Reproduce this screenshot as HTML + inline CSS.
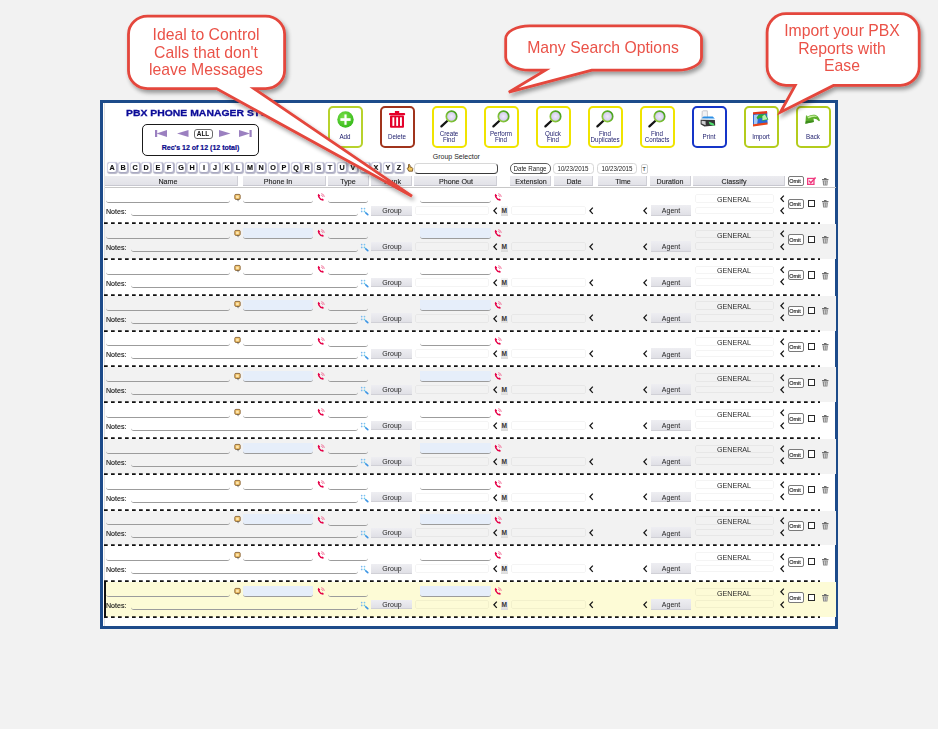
<!DOCTYPE html>
<html><head><meta charset="utf-8"><style>
html,body{margin:0;padding:0;}
body{width:938px;height:729px;position:relative;overflow:hidden;background:#f2f2f2;font-family:"Liberation Sans", sans-serif;}
.t{position:absolute;white-space:nowrap;}
</style></head><body>
<div style="position:absolute;left:100px;top:100px;width:738px;height:529px;box-sizing:border-box;border:3px solid #1d4b8a;background:#fff"></div><div style="position:absolute;left:103.5px;top:103px;width:1px;height:523px;background:#e2e2e2"></div><div class="t" style="left:126px;top:108.27px;font-size:9.6px;line-height:9.6px;color:#0b0b98;font-weight:700;transform:scaleX(1.085);transform-origin:0 50%;-webkit-text-stroke:0.3px #0b0b98">PBX PHONE MANAGER STUDIO</div><div style="position:absolute;left:142px;top:123.5px;width:117px;height:32px;box-sizing:border-box;border:1.7px solid #1a1a1a;border-radius:5px"></div><svg style="position:absolute;left:155px;top:130px;overflow:visible" width="12" height="7" viewBox="0 0 12 7"><rect x="0" y="0" width="2.2" height="7" fill="#9b80c0"/><path d="M1.5 3.5 L12 0 L12 7 Z" fill="#9b80c0"/></svg><svg style="position:absolute;left:176.5px;top:130px;overflow:visible" width="12" height="7" viewBox="0 0 12 7"><path d="M0 3.5 L11.5 0 L11.5 7 Z" fill="#9b80c0"/></svg><svg style="position:absolute;left:218.5px;top:130px;overflow:visible" width="12" height="7" viewBox="0 0 12 7"><path d="M11.5 3.5 L0 0 L0 7 Z" fill="#9b80c0"/></svg><svg style="position:absolute;left:238.5px;top:130px;overflow:visible" width="13" height="7" viewBox="0 0 13 7"><rect x="10.5" y="0" width="2.2" height="7" fill="#9b80c0"/><path d="M11 3.5 L0 0 L0 7 Z" fill="#9b80c0"/></svg><div style="position:absolute;left:194px;top:128.5px;width:18.5px;height:10px;box-sizing:border-box;border:1px solid #6a6a6a;border-radius:3px;background:#fff"></div><div class="t" style="left:53.30000000000001px;width:300px;text-align:center;top:130.47px;font-size:7px;line-height:7px;color:#111;font-weight:700;transform:scaleX(0.92)">ALL</div><div class="t" style="left:50.5px;width:300px;text-align:center;top:144.27px;font-size:7px;line-height:7px;color:#0a0a8c;font-weight:700;-webkit-text-stroke:0.2px #0a0a8c">Rec's 12 of 12 (12 total)</div><div style="position:absolute;left:327.5px;top:105.5px;width:35px;height:42px;box-sizing:border-box;border:2px solid #b8d22c;border-radius:5px;background:#fff"></div><div class="t" style="left:195.0px;width:300px;text-align:center;top:133.83px;font-size:6.7px;line-height:6.7px;color:#20206e;font-weight:400;transform:scaleX(0.93);transform-origin:50% 50%">Add</div><div style="position:absolute;left:379.5px;top:105.5px;width:35px;height:42px;box-sizing:border-box;border:2px solid #a0341c;border-radius:5px;background:#fff"></div><div class="t" style="left:247.0px;width:300px;text-align:center;top:133.83px;font-size:6.7px;line-height:6.7px;color:#20206e;font-weight:400;transform:scaleX(0.93);transform-origin:50% 50%">Delete</div><div style="position:absolute;left:431.5px;top:105.5px;width:35px;height:42px;box-sizing:border-box;border:2px solid #f0e400;border-radius:5px;background:#fff"></div><div class="t" style="left:299.0px;width:300px;text-align:center;top:130.53px;font-size:6.7px;line-height:6.7px;color:#20206e;font-weight:400;transform:scaleX(0.93);transform-origin:50% 50%">Create</div><div class="t" style="left:299.0px;width:300px;text-align:center;top:137.03px;font-size:6.7px;line-height:6.7px;color:#20206e;font-weight:400;transform:scaleX(0.93);transform-origin:50% 50%">Find</div><div style="position:absolute;left:483.5px;top:105.5px;width:35px;height:42px;box-sizing:border-box;border:2px solid #f0e400;border-radius:5px;background:#fff"></div><div class="t" style="left:351.0px;width:300px;text-align:center;top:130.53px;font-size:6.7px;line-height:6.7px;color:#20206e;font-weight:400;transform:scaleX(0.93);transform-origin:50% 50%">Perform</div><div class="t" style="left:351.0px;width:300px;text-align:center;top:137.03px;font-size:6.7px;line-height:6.7px;color:#20206e;font-weight:400;transform:scaleX(0.93);transform-origin:50% 50%">Find</div><div style="position:absolute;left:535.5px;top:105.5px;width:35px;height:42px;box-sizing:border-box;border:2px solid #f0e400;border-radius:5px;background:#fff"></div><div class="t" style="left:403.0px;width:300px;text-align:center;top:130.53px;font-size:6.7px;line-height:6.7px;color:#20206e;font-weight:400;transform:scaleX(0.93);transform-origin:50% 50%">Quick</div><div class="t" style="left:403.0px;width:300px;text-align:center;top:137.03px;font-size:6.7px;line-height:6.7px;color:#20206e;font-weight:400;transform:scaleX(0.93);transform-origin:50% 50%">Find</div><div style="position:absolute;left:587.5px;top:105.5px;width:35px;height:42px;box-sizing:border-box;border:2px solid #f0e400;border-radius:5px;background:#fff"></div><div class="t" style="left:455.0px;width:300px;text-align:center;top:130.53px;font-size:6.7px;line-height:6.7px;color:#20206e;font-weight:400;transform:scaleX(0.93);transform-origin:50% 50%">Find</div><div class="t" style="left:455.0px;width:300px;text-align:center;top:137.03px;font-size:6.7px;line-height:6.7px;color:#20206e;font-weight:400;transform:scaleX(0.93);transform-origin:50% 50%">Duplicates</div><div style="position:absolute;left:639.5px;top:105.5px;width:35px;height:42px;box-sizing:border-box;border:2px solid #f0e400;border-radius:5px;background:#fff"></div><div class="t" style="left:507.0px;width:300px;text-align:center;top:130.53px;font-size:6.7px;line-height:6.7px;color:#20206e;font-weight:400;transform:scaleX(0.93);transform-origin:50% 50%">Find</div><div class="t" style="left:507.0px;width:300px;text-align:center;top:137.03px;font-size:6.7px;line-height:6.7px;color:#20206e;font-weight:400;transform:scaleX(0.93);transform-origin:50% 50%">Contacts</div><div style="position:absolute;left:691.5px;top:105.5px;width:35px;height:42px;box-sizing:border-box;border:2px solid #1535c8;border-radius:5px;background:#fff"></div><div class="t" style="left:559.0px;width:300px;text-align:center;top:133.83px;font-size:6.7px;line-height:6.7px;color:#20206e;font-weight:400;transform:scaleX(0.93);transform-origin:50% 50%">Print</div><div style="position:absolute;left:743.5px;top:105.5px;width:35px;height:42px;box-sizing:border-box;border:2px solid #b4cc1c;border-radius:5px;background:#fff"></div><div class="t" style="left:611.0px;width:300px;text-align:center;top:133.83px;font-size:6.7px;line-height:6.7px;color:#20206e;font-weight:400;transform:scaleX(0.93);transform-origin:50% 50%">Import</div><div style="position:absolute;left:795.5px;top:105.5px;width:35px;height:42px;box-sizing:border-box;border:2px solid #b4cc1c;border-radius:5px;background:#fff"></div><div class="t" style="left:663.0px;width:300px;text-align:center;top:133.83px;font-size:6.7px;line-height:6.7px;color:#20206e;font-weight:400;transform:scaleX(0.93);transform-origin:50% 50%">Back</div><svg style="position:absolute;left:336.5px;top:110.7px;overflow:visible" width="17" height="17" viewBox="0 0 17 17"><defs><radialGradient id="gp" cx="40%" cy="35%" r="70%"><stop offset="0" stop-color="#7be04a"/><stop offset="1" stop-color="#33b818"/></radialGradient></defs><circle cx="8.5" cy="8.5" r="8.2" fill="url(#gp)"/><rect x="3.4" y="7.2" width="10.2" height="2.7" fill="#fff"/><rect x="7.4" y="3.4" width="2.2" height="10.4" fill="#fff"/></svg><svg style="position:absolute;left:388.8px;top:110.8px;overflow:visible" width="16.2" height="17" viewBox="0 0 16.2 17"><rect x="5.9" y="0" width="4.3" height="2" fill="#e4002a"/><rect x="0" y="2" width="16.2" height="2.3" rx="1" fill="#e4002a"/><rect x="1" y="4.6" width="14" height="12.2" rx="1" fill="#e4002a"/><rect x="3.4" y="6.3" width="1.9" height="8.6" fill="#fff"/><rect x="7.2" y="6.3" width="1.9" height="8.6" fill="#fff"/><rect x="11" y="6.3" width="1.9" height="8.6" fill="#fff"/></svg><svg style="position:absolute;left:437.0px;top:109px;overflow:visible" width="18" height="19" viewBox="0 0 18 19"><defs><radialGradient id="gl2" cx="50%" cy="50%" r="60%"><stop offset="0" stop-color="#eeeaf8"/><stop offset="1" stop-color="#c8c0e8"/></radialGradient><linearGradient id="gr2" x1="0" y1="1" x2="1" y2="0"><stop offset="0" stop-color="#9ad040"/><stop offset="1" stop-color="#3a9a1a"/></linearGradient></defs><line x1="10.2" y1="12" x2="4.4" y2="17.4" stroke="#151515" stroke-width="2.3" stroke-linecap="round"/><circle cx="14.5" cy="7.4" r="5.2" fill="url(#gl2)" stroke="url(#gr2)" stroke-width="1.7"/></svg><svg style="position:absolute;left:489.0px;top:109px;overflow:visible" width="18" height="19" viewBox="0 0 18 19"><defs><radialGradient id="gl3" cx="50%" cy="50%" r="60%"><stop offset="0" stop-color="#eeeaf8"/><stop offset="1" stop-color="#c8c0e8"/></radialGradient><linearGradient id="gr3" x1="0" y1="1" x2="1" y2="0"><stop offset="0" stop-color="#9ad040"/><stop offset="1" stop-color="#3a9a1a"/></linearGradient></defs><line x1="10.2" y1="12" x2="4.4" y2="17.4" stroke="#151515" stroke-width="2.3" stroke-linecap="round"/><circle cx="14.5" cy="7.4" r="5.2" fill="url(#gl3)" stroke="url(#gr3)" stroke-width="1.7"/></svg><svg style="position:absolute;left:541.0px;top:109px;overflow:visible" width="18" height="19" viewBox="0 0 18 19"><defs><radialGradient id="gl4" cx="50%" cy="50%" r="60%"><stop offset="0" stop-color="#eeeaf8"/><stop offset="1" stop-color="#c8c0e8"/></radialGradient><linearGradient id="gr4" x1="0" y1="1" x2="1" y2="0"><stop offset="0" stop-color="#9ad040"/><stop offset="1" stop-color="#3a9a1a"/></linearGradient></defs><line x1="10.2" y1="12" x2="4.4" y2="17.4" stroke="#151515" stroke-width="2.3" stroke-linecap="round"/><circle cx="14.5" cy="7.4" r="5.2" fill="url(#gl4)" stroke="url(#gr4)" stroke-width="1.7"/></svg><svg style="position:absolute;left:593.0px;top:109px;overflow:visible" width="18" height="19" viewBox="0 0 18 19"><defs><radialGradient id="gl5" cx="50%" cy="50%" r="60%"><stop offset="0" stop-color="#eeeaf8"/><stop offset="1" stop-color="#c8c0e8"/></radialGradient><linearGradient id="gr5" x1="0" y1="1" x2="1" y2="0"><stop offset="0" stop-color="#9ad040"/><stop offset="1" stop-color="#3a9a1a"/></linearGradient></defs><line x1="10.2" y1="12" x2="4.4" y2="17.4" stroke="#151515" stroke-width="2.3" stroke-linecap="round"/><circle cx="14.5" cy="7.4" r="5.2" fill="url(#gl5)" stroke="url(#gr5)" stroke-width="1.7"/></svg><svg style="position:absolute;left:645.0px;top:109px;overflow:visible" width="18" height="19" viewBox="0 0 18 19"><defs><radialGradient id="gl6" cx="50%" cy="50%" r="60%"><stop offset="0" stop-color="#eeeaf8"/><stop offset="1" stop-color="#c8c0e8"/></radialGradient><linearGradient id="gr6" x1="0" y1="1" x2="1" y2="0"><stop offset="0" stop-color="#9ad040"/><stop offset="1" stop-color="#3a9a1a"/></linearGradient></defs><line x1="10.2" y1="12" x2="4.4" y2="17.4" stroke="#151515" stroke-width="2.3" stroke-linecap="round"/><circle cx="14.5" cy="7.4" r="5.2" fill="url(#gl6)" stroke="url(#gr6)" stroke-width="1.7"/></svg><svg style="position:absolute;left:696px;top:106px;overflow:visible" width="26" height="24" viewBox="0 0 26 24"><path d="M6.2 5.6 Q6.4 4.8 7.2 4.8 L11.3 4.8 L11.6 12.5 L6 12.5 Z" fill="#f2f2f4" stroke="#b4b4bc" stroke-width="0.7"/><path d="M5.2 12.6 L7.6 10.4 L16.8 10.6 L18.8 12.8 Z" fill="#2c8fe6"/><path d="M5.2 12.6 L18.8 12.8 L18.6 14 L5 13.8 Z" fill="#dff0ff"/><path d="M4.6 13.8 L18.9 14 L19.2 19.6 L8.4 20.6 L4.6 18.2 Z" fill="#363636"/><path d="M5.6 14.8 L9.6 15.2 L9.6 19.2 L5.6 17.4 Z" fill="#cfcfd2"/><path d="M12.6 15.6 L17.6 17.6 L18.6 20 L13.8 18.6 Z" fill="#52e070"/></svg><svg style="position:absolute;left:748px;top:106px;overflow:visible" width="26" height="24" viewBox="0 0 26 24"><path d="M5 7 L19.2 6 L19.6 17.6 L5 20 Z" fill="#2a6ad8"/><path d="M5 6.2 L19 5 L19.2 7.6 L5 8.4 Z" fill="#e2381c"/><path d="M5 18.2 L19.4 16.4 L19.6 18.4 L5 20.6 Z" fill="#ea4418"/><path d="M6 9 L10.5 8.6 L9.2 17.8 L6 18.3 Z" fill="#a8c8f4"/><path d="M8.6 11.6 Q10.6 7.2 15.6 8.6 L17 7.4 L20.4 13.6 L13.6 15 L15 12.8 Q12.4 10.8 9.6 13.4 Z" fill="#2aa838"/><path d="M14.4 10 L17 8.6 L19.4 13.2 L14.4 14.2 Z" fill="#b8f0b0"/></svg><svg style="position:absolute;left:800px;top:108px;overflow:visible" width="26" height="22" viewBox="0 0 26 22"><path d="M5.3 15.8 L6 7.2 L8 8.2 Q11 6.2 15 6.8 Q18.2 7.6 20 12.4 L19 13.2 Q16.8 10.6 13.6 10.4 L13.8 14 Z" fill="#5cae2a"/><path d="M6.4 8 L8.2 8.8 Q11.4 7 15 7.6 Q16.2 8 17 9 Q12.8 8 8.6 10.6 Z" fill="#c2ec9a"/><path d="M6 13 L13.6 12.6 L13.8 14 L5.3 15.8 Z" fill="#3e8c1e"/></svg><div style="position:absolute;left:106.8px;top:161.6px;width:10px;height:11px;box-sizing:border-box;border:1px solid #d4d4e6;border-right-color:#b0b0c8;border-bottom-color:#a8a8c0;border-radius:3px;background:#fff;box-shadow:0.6px 0.8px 0.8px rgba(90,90,130,0.45)"></div><div class="t" style="left:-38.400000000000006px;width:300px;text-align:center;top:163.67px;font-size:7.6px;line-height:7.6px;color:#111;font-weight:700;transform:scaleX(0.95);-webkit-text-stroke:0.15px #111">A</div><div style="position:absolute;left:118.3px;top:161.6px;width:10px;height:11px;box-sizing:border-box;border:1px solid #d4d4e6;border-right-color:#b0b0c8;border-bottom-color:#a8a8c0;border-radius:3px;background:#fff;box-shadow:0.6px 0.8px 0.8px rgba(90,90,130,0.45)"></div><div class="t" style="left:-26.900000000000006px;width:300px;text-align:center;top:163.67px;font-size:7.6px;line-height:7.6px;color:#111;font-weight:700;transform:scaleX(0.95);-webkit-text-stroke:0.15px #111">B</div><div style="position:absolute;left:129.8px;top:161.6px;width:10px;height:11px;box-sizing:border-box;border:1px solid #d4d4e6;border-right-color:#b0b0c8;border-bottom-color:#a8a8c0;border-radius:3px;background:#fff;box-shadow:0.6px 0.8px 0.8px rgba(90,90,130,0.45)"></div><div class="t" style="left:-15.399999999999977px;width:300px;text-align:center;top:163.67px;font-size:7.6px;line-height:7.6px;color:#111;font-weight:700;transform:scaleX(0.95);-webkit-text-stroke:0.15px #111">C</div><div style="position:absolute;left:141.3px;top:161.6px;width:10px;height:11px;box-sizing:border-box;border:1px solid #d4d4e6;border-right-color:#b0b0c8;border-bottom-color:#a8a8c0;border-radius:3px;background:#fff;box-shadow:0.6px 0.8px 0.8px rgba(90,90,130,0.45)"></div><div class="t" style="left:-3.8999999999999773px;width:300px;text-align:center;top:163.67px;font-size:7.6px;line-height:7.6px;color:#111;font-weight:700;transform:scaleX(0.95);-webkit-text-stroke:0.15px #111">D</div><div style="position:absolute;left:152.8px;top:161.6px;width:10px;height:11px;box-sizing:border-box;border:1px solid #d4d4e6;border-right-color:#b0b0c8;border-bottom-color:#a8a8c0;border-radius:3px;background:#fff;box-shadow:0.6px 0.8px 0.8px rgba(90,90,130,0.45)"></div><div class="t" style="left:7.600000000000023px;width:300px;text-align:center;top:163.67px;font-size:7.6px;line-height:7.6px;color:#111;font-weight:700;transform:scaleX(0.95);-webkit-text-stroke:0.15px #111">E</div><div style="position:absolute;left:164.3px;top:161.6px;width:10px;height:11px;box-sizing:border-box;border:1px solid #d4d4e6;border-right-color:#b0b0c8;border-bottom-color:#a8a8c0;border-radius:3px;background:#fff;box-shadow:0.6px 0.8px 0.8px rgba(90,90,130,0.45)"></div><div class="t" style="left:19.100000000000023px;width:300px;text-align:center;top:163.67px;font-size:7.6px;line-height:7.6px;color:#111;font-weight:700;transform:scaleX(0.95);-webkit-text-stroke:0.15px #111">F</div><div style="position:absolute;left:175.8px;top:161.6px;width:10px;height:11px;box-sizing:border-box;border:1px solid #d4d4e6;border-right-color:#b0b0c8;border-bottom-color:#a8a8c0;border-radius:3px;background:#fff;box-shadow:0.6px 0.8px 0.8px rgba(90,90,130,0.45)"></div><div class="t" style="left:30.600000000000023px;width:300px;text-align:center;top:163.67px;font-size:7.6px;line-height:7.6px;color:#111;font-weight:700;transform:scaleX(0.95);-webkit-text-stroke:0.15px #111">G</div><div style="position:absolute;left:187.3px;top:161.6px;width:10px;height:11px;box-sizing:border-box;border:1px solid #d4d4e6;border-right-color:#b0b0c8;border-bottom-color:#a8a8c0;border-radius:3px;background:#fff;box-shadow:0.6px 0.8px 0.8px rgba(90,90,130,0.45)"></div><div class="t" style="left:42.10000000000002px;width:300px;text-align:center;top:163.67px;font-size:7.6px;line-height:7.6px;color:#111;font-weight:700;transform:scaleX(0.95);-webkit-text-stroke:0.15px #111">H</div><div style="position:absolute;left:198.8px;top:161.6px;width:10px;height:11px;box-sizing:border-box;border:1px solid #d4d4e6;border-right-color:#b0b0c8;border-bottom-color:#a8a8c0;border-radius:3px;background:#fff;box-shadow:0.6px 0.8px 0.8px rgba(90,90,130,0.45)"></div><div class="t" style="left:53.60000000000002px;width:300px;text-align:center;top:163.67px;font-size:7.6px;line-height:7.6px;color:#111;font-weight:700;transform:scaleX(0.95);-webkit-text-stroke:0.15px #111">I</div><div style="position:absolute;left:210.3px;top:161.6px;width:10px;height:11px;box-sizing:border-box;border:1px solid #d4d4e6;border-right-color:#b0b0c8;border-bottom-color:#a8a8c0;border-radius:3px;background:#fff;box-shadow:0.6px 0.8px 0.8px rgba(90,90,130,0.45)"></div><div class="t" style="left:65.10000000000002px;width:300px;text-align:center;top:163.67px;font-size:7.6px;line-height:7.6px;color:#111;font-weight:700;transform:scaleX(0.95);-webkit-text-stroke:0.15px #111">J</div><div style="position:absolute;left:221.8px;top:161.6px;width:10px;height:11px;box-sizing:border-box;border:1px solid #d4d4e6;border-right-color:#b0b0c8;border-bottom-color:#a8a8c0;border-radius:3px;background:#fff;box-shadow:0.6px 0.8px 0.8px rgba(90,90,130,0.45)"></div><div class="t" style="left:76.60000000000002px;width:300px;text-align:center;top:163.67px;font-size:7.6px;line-height:7.6px;color:#111;font-weight:700;transform:scaleX(0.95);-webkit-text-stroke:0.15px #111">K</div><div style="position:absolute;left:233.3px;top:161.6px;width:10px;height:11px;box-sizing:border-box;border:1px solid #d4d4e6;border-right-color:#b0b0c8;border-bottom-color:#a8a8c0;border-radius:3px;background:#fff;box-shadow:0.6px 0.8px 0.8px rgba(90,90,130,0.45)"></div><div class="t" style="left:88.10000000000002px;width:300px;text-align:center;top:163.67px;font-size:7.6px;line-height:7.6px;color:#111;font-weight:700;transform:scaleX(0.95);-webkit-text-stroke:0.15px #111">L</div><div style="position:absolute;left:244.8px;top:161.6px;width:10px;height:11px;box-sizing:border-box;border:1px solid #d4d4e6;border-right-color:#b0b0c8;border-bottom-color:#a8a8c0;border-radius:3px;background:#fff;box-shadow:0.6px 0.8px 0.8px rgba(90,90,130,0.45)"></div><div class="t" style="left:99.60000000000002px;width:300px;text-align:center;top:163.67px;font-size:7.6px;line-height:7.6px;color:#111;font-weight:700;transform:scaleX(0.95);-webkit-text-stroke:0.15px #111">M</div><div style="position:absolute;left:256.3px;top:161.6px;width:10px;height:11px;box-sizing:border-box;border:1px solid #d4d4e6;border-right-color:#b0b0c8;border-bottom-color:#a8a8c0;border-radius:3px;background:#fff;box-shadow:0.6px 0.8px 0.8px rgba(90,90,130,0.45)"></div><div class="t" style="left:111.10000000000002px;width:300px;text-align:center;top:163.67px;font-size:7.6px;line-height:7.6px;color:#111;font-weight:700;transform:scaleX(0.95);-webkit-text-stroke:0.15px #111">N</div><div style="position:absolute;left:267.8px;top:161.6px;width:10px;height:11px;box-sizing:border-box;border:1px solid #d4d4e6;border-right-color:#b0b0c8;border-bottom-color:#a8a8c0;border-radius:3px;background:#fff;box-shadow:0.6px 0.8px 0.8px rgba(90,90,130,0.45)"></div><div class="t" style="left:122.60000000000002px;width:300px;text-align:center;top:163.67px;font-size:7.6px;line-height:7.6px;color:#111;font-weight:700;transform:scaleX(0.95);-webkit-text-stroke:0.15px #111">O</div><div style="position:absolute;left:279.3px;top:161.6px;width:10px;height:11px;box-sizing:border-box;border:1px solid #d4d4e6;border-right-color:#b0b0c8;border-bottom-color:#a8a8c0;border-radius:3px;background:#fff;box-shadow:0.6px 0.8px 0.8px rgba(90,90,130,0.45)"></div><div class="t" style="left:134.10000000000002px;width:300px;text-align:center;top:163.67px;font-size:7.6px;line-height:7.6px;color:#111;font-weight:700;transform:scaleX(0.95);-webkit-text-stroke:0.15px #111">P</div><div style="position:absolute;left:290.8px;top:161.6px;width:10px;height:11px;box-sizing:border-box;border:1px solid #d4d4e6;border-right-color:#b0b0c8;border-bottom-color:#a8a8c0;border-radius:3px;background:#fff;box-shadow:0.6px 0.8px 0.8px rgba(90,90,130,0.45)"></div><div class="t" style="left:145.60000000000002px;width:300px;text-align:center;top:163.67px;font-size:7.6px;line-height:7.6px;color:#111;font-weight:700;transform:scaleX(0.95);-webkit-text-stroke:0.15px #111">Q</div><div style="position:absolute;left:302.3px;top:161.6px;width:10px;height:11px;box-sizing:border-box;border:1px solid #d4d4e6;border-right-color:#b0b0c8;border-bottom-color:#a8a8c0;border-radius:3px;background:#fff;box-shadow:0.6px 0.8px 0.8px rgba(90,90,130,0.45)"></div><div class="t" style="left:157.10000000000002px;width:300px;text-align:center;top:163.67px;font-size:7.6px;line-height:7.6px;color:#111;font-weight:700;transform:scaleX(0.95);-webkit-text-stroke:0.15px #111">R</div><div style="position:absolute;left:313.8px;top:161.6px;width:10px;height:11px;box-sizing:border-box;border:1px solid #d4d4e6;border-right-color:#b0b0c8;border-bottom-color:#a8a8c0;border-radius:3px;background:#fff;box-shadow:0.6px 0.8px 0.8px rgba(90,90,130,0.45)"></div><div class="t" style="left:168.60000000000002px;width:300px;text-align:center;top:163.67px;font-size:7.6px;line-height:7.6px;color:#111;font-weight:700;transform:scaleX(0.95);-webkit-text-stroke:0.15px #111">S</div><div style="position:absolute;left:325.3px;top:161.6px;width:10px;height:11px;box-sizing:border-box;border:1px solid #d4d4e6;border-right-color:#b0b0c8;border-bottom-color:#a8a8c0;border-radius:3px;background:#fff;box-shadow:0.6px 0.8px 0.8px rgba(90,90,130,0.45)"></div><div class="t" style="left:180.10000000000002px;width:300px;text-align:center;top:163.67px;font-size:7.6px;line-height:7.6px;color:#111;font-weight:700;transform:scaleX(0.95);-webkit-text-stroke:0.15px #111">T</div><div style="position:absolute;left:336.8px;top:161.6px;width:10px;height:11px;box-sizing:border-box;border:1px solid #d4d4e6;border-right-color:#b0b0c8;border-bottom-color:#a8a8c0;border-radius:3px;background:#fff;box-shadow:0.6px 0.8px 0.8px rgba(90,90,130,0.45)"></div><div class="t" style="left:191.60000000000002px;width:300px;text-align:center;top:163.67px;font-size:7.6px;line-height:7.6px;color:#111;font-weight:700;transform:scaleX(0.95);-webkit-text-stroke:0.15px #111">U</div><div style="position:absolute;left:348.3px;top:161.6px;width:10px;height:11px;box-sizing:border-box;border:1px solid #d4d4e6;border-right-color:#b0b0c8;border-bottom-color:#a8a8c0;border-radius:3px;background:#fff;box-shadow:0.6px 0.8px 0.8px rgba(90,90,130,0.45)"></div><div class="t" style="left:203.10000000000002px;width:300px;text-align:center;top:163.67px;font-size:7.6px;line-height:7.6px;color:#111;font-weight:700;transform:scaleX(0.95);-webkit-text-stroke:0.15px #111">V</div><div style="position:absolute;left:359.8px;top:161.6px;width:10px;height:11px;box-sizing:border-box;border:1px solid #d4d4e6;border-right-color:#b0b0c8;border-bottom-color:#a8a8c0;border-radius:3px;background:#fff;box-shadow:0.6px 0.8px 0.8px rgba(90,90,130,0.45)"></div><div class="t" style="left:214.60000000000002px;width:300px;text-align:center;top:163.67px;font-size:7.6px;line-height:7.6px;color:#111;font-weight:700;transform:scaleX(0.95);-webkit-text-stroke:0.15px #111">W</div><div style="position:absolute;left:371.3px;top:161.6px;width:10px;height:11px;box-sizing:border-box;border:1px solid #d4d4e6;border-right-color:#b0b0c8;border-bottom-color:#a8a8c0;border-radius:3px;background:#fff;box-shadow:0.6px 0.8px 0.8px rgba(90,90,130,0.45)"></div><div class="t" style="left:226.10000000000002px;width:300px;text-align:center;top:163.67px;font-size:7.6px;line-height:7.6px;color:#111;font-weight:700;transform:scaleX(0.95);-webkit-text-stroke:0.15px #111">X</div><div style="position:absolute;left:382.8px;top:161.6px;width:10px;height:11px;box-sizing:border-box;border:1px solid #d4d4e6;border-right-color:#b0b0c8;border-bottom-color:#a8a8c0;border-radius:3px;background:#fff;box-shadow:0.6px 0.8px 0.8px rgba(90,90,130,0.45)"></div><div class="t" style="left:237.60000000000002px;width:300px;text-align:center;top:163.67px;font-size:7.6px;line-height:7.6px;color:#111;font-weight:700;transform:scaleX(0.95);-webkit-text-stroke:0.15px #111">Y</div><div style="position:absolute;left:394.3px;top:161.6px;width:10px;height:11px;box-sizing:border-box;border:1px solid #d4d4e6;border-right-color:#b0b0c8;border-bottom-color:#a8a8c0;border-radius:3px;background:#fff;box-shadow:0.6px 0.8px 0.8px rgba(90,90,130,0.45)"></div><div class="t" style="left:249.10000000000002px;width:300px;text-align:center;top:163.67px;font-size:7.6px;line-height:7.6px;color:#111;font-weight:700;transform:scaleX(0.95);-webkit-text-stroke:0.15px #111">Z</div><svg style="position:absolute;left:406.5px;top:163.5px;overflow:visible" width="6" height="7.5" viewBox="0 0 6 7.5"><path d="M1.5 0.5 Q2.5 0 3 1 L3 3 Q5.5 3 5.8 4.5 L5.5 7.2 L1.8 7.2 L0.3 4.5 Q0.2 3.5 1.5 4 Z" fill="#f2c860" stroke="#6a4418" stroke-width="0.8"/></svg><div class="t" style="left:432.8px;top:152.97px;font-size:7px;line-height:7px;color:#262626;font-weight:400;">Group Selector</div><div style="position:absolute;left:414.3px;top:163px;width:84px;height:11px;box-sizing:border-box;border:1px solid #d8d8d8;border-right:1.5px solid #444;border-bottom:1.8px solid #3a3a3a;border-radius:4px;background:#fff"></div><div style="position:absolute;left:509.5px;top:163.3px;width:41px;height:10.8px;box-sizing:border-box;border:1px solid #606060;border-radius:5px;background:#fff"></div><div class="t" style="left:380px;width:300px;text-align:center;top:165.66px;font-size:6.9px;line-height:6.9px;color:#222;font-weight:400;transform:scaleX(0.9)">Date Range</div><div style="position:absolute;left:553px;top:163.3px;width:40.5px;height:10.8px;box-sizing:border-box;border:1px solid #d6d6d6;border-radius:3.5px;background:#fff"></div><div class="t" style="left:423.25px;width:300px;text-align:center;top:165.66px;font-size:6.9px;line-height:6.9px;color:#222;font-weight:400;transform:scaleX(0.9)">10/23/2015</div><div style="position:absolute;left:597.3px;top:163.3px;width:40.10000000000002px;height:10.8px;box-sizing:border-box;border:1px solid #d6d6d6;border-radius:3.5px;background:#fff"></div><div class="t" style="left:467.3499999999999px;width:300px;text-align:center;top:165.66px;font-size:6.9px;line-height:6.9px;color:#222;font-weight:400;transform:scaleX(0.9)">10/23/2015</div><div style="position:absolute;left:641px;top:163.5px;width:6.5px;height:10.5px;box-sizing:border-box;border:1px solid #d0d0d0;border-radius:2px;background:#fff"></div><div class="t" style="left:494.20000000000005px;width:300px;text-align:center;top:166.22px;font-size:6px;line-height:6px;color:#222;font-weight:400;">T</div><div style="position:absolute;left:104.5px;top:175.8px;width:133.9px;height:10.2px;box-sizing:border-box;background:linear-gradient(#ececf0,#e2e2e8);border-right:1px solid #cfcfd6;border-bottom:1px solid #c8c8d0"></div><div class="t" style="left:18.099999999999994px;width:300px;text-align:center;top:177.57px;font-size:7.6px;line-height:7.6px;color:#1e1e1e;font-weight:400;transform:scaleX(0.94);-webkit-text-stroke:0.12px #1e1e1e">Name</div><div style="position:absolute;left:242.6px;top:175.8px;width:83.1px;height:10.2px;box-sizing:border-box;background:linear-gradient(#ececf0,#e2e2e8);border-right:1px solid #cfcfd6;border-bottom:1px solid #c8c8d0"></div><div class="t" style="left:128px;width:300px;text-align:center;top:177.57px;font-size:7.6px;line-height:7.6px;color:#1e1e1e;font-weight:400;transform:scaleX(0.94);-webkit-text-stroke:0.12px #1e1e1e">Phone In</div><div style="position:absolute;left:327.5px;top:175.8px;width:41.10000000000002px;height:10.2px;box-sizing:border-box;background:linear-gradient(#ececf0,#e2e2e8);border-right:1px solid #cfcfd6;border-bottom:1px solid #c8c8d0"></div><div class="t" style="left:198.05px;width:300px;text-align:center;top:177.57px;font-size:7.6px;line-height:7.6px;color:#1e1e1e;font-weight:400;transform:scaleX(0.94);-webkit-text-stroke:0.12px #1e1e1e">Type</div><div style="position:absolute;left:371.2px;top:175.8px;width:40.80000000000001px;height:10.2px;box-sizing:border-box;background:linear-gradient(#ececf0,#e2e2e8);border-right:1px solid #cfcfd6;border-bottom:1px solid #c8c8d0"></div><div class="t" style="left:241.60000000000002px;width:300px;text-align:center;top:177.57px;font-size:7.6px;line-height:7.6px;color:#1e1e1e;font-weight:400;transform:scaleX(0.94);-webkit-text-stroke:0.12px #1e1e1e">Trunk</div><div style="position:absolute;left:414.2px;top:175.8px;width:82.80000000000001px;height:10.2px;box-sizing:border-box;background:linear-gradient(#ececf0,#e2e2e8);border-right:1px solid #cfcfd6;border-bottom:1px solid #c8c8d0"></div><div class="t" style="left:305.6px;width:300px;text-align:center;top:177.57px;font-size:7.6px;line-height:7.6px;color:#1e1e1e;font-weight:400;transform:scaleX(0.94);-webkit-text-stroke:0.12px #1e1e1e">Phone Out</div><div style="position:absolute;left:510.2px;top:175.8px;width:40.599999999999966px;height:10.2px;box-sizing:border-box;background:linear-gradient(#ececf0,#e2e2e8);border-right:1px solid #cfcfd6;border-bottom:1px solid #c8c8d0"></div><div class="t" style="left:380.5px;width:300px;text-align:center;top:177.57px;font-size:7.6px;line-height:7.6px;color:#1e1e1e;font-weight:400;transform:scaleX(0.94);-webkit-text-stroke:0.12px #1e1e1e">Extension</div><div style="position:absolute;left:553.6px;top:175.8px;width:39.89999999999998px;height:10.2px;box-sizing:border-box;background:linear-gradient(#ececf0,#e2e2e8);border-right:1px solid #cfcfd6;border-bottom:1px solid #c8c8d0"></div><div class="t" style="left:423.54999999999995px;width:300px;text-align:center;top:177.57px;font-size:7.6px;line-height:7.6px;color:#1e1e1e;font-weight:400;transform:scaleX(0.94);-webkit-text-stroke:0.12px #1e1e1e">Date</div><div style="position:absolute;left:597.8px;top:175.8px;width:49.700000000000045px;height:10.2px;box-sizing:border-box;background:linear-gradient(#ececf0,#e2e2e8);border-right:1px solid #cfcfd6;border-bottom:1px solid #c8c8d0"></div><div class="t" style="left:472.65px;width:300px;text-align:center;top:177.57px;font-size:7.6px;line-height:7.6px;color:#1e1e1e;font-weight:400;transform:scaleX(0.94);-webkit-text-stroke:0.12px #1e1e1e">Time</div><div style="position:absolute;left:650.2px;top:175.8px;width:40.5px;height:10.2px;box-sizing:border-box;background:linear-gradient(#ececf0,#e2e2e8);border-right:1px solid #cfcfd6;border-bottom:1px solid #c8c8d0"></div><div class="t" style="left:520.45px;width:300px;text-align:center;top:177.57px;font-size:7.6px;line-height:7.6px;color:#1e1e1e;font-weight:400;transform:scaleX(0.94);-webkit-text-stroke:0.12px #1e1e1e">Duration</div><div style="position:absolute;left:693.3px;top:175.8px;width:91.70000000000005px;height:10.2px;box-sizing:border-box;background:linear-gradient(#ececf0,#e2e2e8);border-right:1px solid #cfcfd6;border-bottom:1px solid #c8c8d0"></div><div class="t" style="left:584px;width:300px;text-align:center;top:177.57px;font-size:7.6px;line-height:7.6px;color:#1e1e1e;font-weight:400;transform:scaleX(0.94);-webkit-text-stroke:0.12px #1e1e1e">Classify</div><div style="position:absolute;left:104.5px;top:186.6px;width:731px;height:1px;background:#c8c8c8"></div><div style="position:absolute;left:787.5px;top:176px;width:16.2px;height:9.8px;box-sizing:border-box;border:1px solid #7a7a7a;border-radius:2px;background:#fff"></div><div class="t" style="left:645.4px;width:300px;text-align:center;top:178.14px;font-size:6.1px;line-height:6.1px;color:#1a1a1a;font-weight:400;transform:scaleX(0.9);-webkit-text-stroke:0.15px #1a1a1a">Omit</div><svg style="position:absolute;left:807px;top:177.3px;overflow:visible" width="9" height="8" viewBox="0 0 9 8"><rect x="0" y="0.8" width="7.6" height="7.2" fill="#f03c80"/><rect x="1.3" y="2.1" width="5" height="4.6" fill="#fff"/><path d="M2 3.6 L3.8 5.8 L8.6 0.4" fill="none" stroke="#f03c80" stroke-width="1.5"/></svg><svg style="position:absolute;left:822px;top:177.5px;overflow:visible" width="6.5" height="7.5" viewBox="0 0 6.5 7.5"><rect x="2" y="0" width="2.5" height="1" fill="#707070"/><rect x="0" y="1" width="6.5" height="1.2" fill="#707070"/><path d="M0.6 2.5 H5.9 L5.4 7.5 H1.1 Z" fill="#8a8a8a"/><rect x="2" y="3.2" width="0.7" height="3.5" fill="#e8e8e8"/><rect x="3.8" y="3.2" width="0.7" height="3.5" fill="#e8e8e8"/></svg><div style="position:absolute;left:105.5px;top:192.09999999999997px;width:124.80000000000001px;height:11px;box-sizing:border-box;background:transparent;border-bottom:1.5px solid #9c9c9c;border-radius:0 0 3px 3px"></div><svg style="position:absolute;left:233.5px;top:193.7px;overflow:visible" width="7" height="8" viewBox="0 0 7 8"><path d="M0.8 1.4 Q0.8 0.4 1.8 0.4 L5.2 0.4 Q6.2 0.4 6.2 1.4 L6.2 4.2 Q6.2 5.4 5 5.4 L2 5.4 Q0.8 5.4 0.8 4.2 Z" fill="#f2c46a" stroke="#7a5224" stroke-width="0.8"/><rect x="2.2" y="1.8" width="2.4" height="2.2" fill="#fde7b4"/><path d="M3.2 5.4 L4.6 5.4 L4.1 7.6 Z" fill="#4a4a4a"/></svg><div style="position:absolute;left:243.3px;top:192.09999999999997px;width:69.5px;height:11px;box-sizing:border-box;background:transparent;border-bottom:1.5px solid #9c9c9c;border-radius:0 0 3px 3px"></div><svg style="position:absolute;left:317px;top:193.39999999999998px;overflow:visible" width="8" height="8" viewBox="0 0 8 8"><path d="M1.3 0.8 Q0.2 2 1.2 4.2 Q2.8 7 5.2 7.6 Q6.3 7.8 7 7 L5.6 5.4 L4.7 5.9 Q3.2 5.2 2.5 3.4 L3.2 2.6 Z" fill="#e60048"/><path d="M4.2 0.6 Q7 1 7.4 3.8" fill="none" stroke="#f07098" stroke-width="0.9"/><path d="M4.2 2.2 Q5.8 2.5 6 4" fill="none" stroke="#f07098" stroke-width="0.9"/></svg><div style="position:absolute;left:327.8px;top:194.29999999999998px;width:40.19999999999999px;height:9px;box-sizing:border-box;background:transparent;border-bottom:1.5px solid #9c9c9c;border-radius:0 0 3px 3px"></div><div style="position:absolute;left:419.7px;top:192.09999999999997px;width:71.10000000000002px;height:11px;box-sizing:border-box;background:transparent;border-bottom:1.5px solid #9c9c9c;border-radius:0 0 3px 3px"></div><svg style="position:absolute;left:494.2px;top:193.39999999999998px;overflow:visible" width="8" height="8" viewBox="0 0 8 8"><path d="M1.3 0.8 Q0.2 2 1.2 4.2 Q2.8 7 5.2 7.6 Q6.3 7.8 7 7 L5.6 5.4 L4.7 5.9 Q3.2 5.2 2.5 3.4 L3.2 2.6 Z" fill="#e60048"/><path d="M4.2 0.6 Q7 1 7.4 3.8" fill="none" stroke="#f07098" stroke-width="0.9"/><path d="M4.2 2.2 Q5.8 2.5 6 4" fill="none" stroke="#f07098" stroke-width="0.9"/></svg><div class="t" style="left:105.6px;top:208.24px;font-size:7.4px;line-height:7.4px;color:#151515;font-weight:400;transform:scaleX(0.96);transform-origin:0 50%;-webkit-text-stroke:0.12px #151515">Notes:</div><div style="position:absolute;left:130.7px;top:207.09999999999997px;width:227.7px;height:9px;box-sizing:border-box;background:transparent;border-bottom:1.5px solid #9c9c9c;border-radius:0 0 3px 3px"></div><svg style="position:absolute;left:359.8px;top:207.29999999999998px;overflow:visible" width="8.5" height="8" viewBox="0 0 8.5 8"><circle cx="1.7" cy="1.6" r="0.85" fill="#7ab8f0"/><circle cx="4.5" cy="1.6" r="0.85" fill="#7ac4f0"/><circle cx="1.7" cy="4.4" r="0.85" fill="#7ab8f0"/><circle cx="4.5" cy="4.4" r="0.85" fill="#60c8e8"/><line x1="5.8" y1="5.8" x2="7.8" y2="7.6" stroke="#3c94e4" stroke-width="1.6" stroke-linecap="round"/></svg><div style="position:absolute;left:371px;top:206.0px;width:41px;height:9.599999999999994px;box-sizing:border-box;background:linear-gradient(#eeeef2,#e0e0e6);border-bottom:1px solid #d0d0d6"></div><div class="t" style="left:241.5px;width:300px;text-align:center;top:207.15px;font-size:7.5px;line-height:7.5px;color:#262626;font-weight:400;transform:scaleX(0.93)">Group</div><div style="position:absolute;left:414.5px;top:206.2px;width:74.5px;height:9.0px;box-sizing:border-box;background:transparent;border:1px solid rgba(0,0,0,0.045);border-radius:2px"></div><svg style="position:absolute;left:493px;top:207.2px;overflow:visible" width="4.5" height="7.5" viewBox="0 0 4.5 7.5"><path d="M3.8 0.6 L0.9 3.75 L3.8 6.9" fill="none" stroke="#1a1a1a" stroke-width="1.3"/></svg><div style="position:absolute;left:501px;top:206.2px;width:6.5px;height:9.5px;background:linear-gradient(#f4f4f4,#dcdcdc)"></div><div class="t" style="left:354.3px;width:300px;text-align:center;top:208.11px;font-size:6.6px;line-height:6.6px;color:#333;font-weight:700;">M</div><div style="position:absolute;left:510.7px;top:206.2px;width:75.80000000000001px;height:9.0px;box-sizing:border-box;background:transparent;border:1px solid rgba(0,0,0,0.045);border-radius:2px"></div><svg style="position:absolute;left:589.4px;top:207.0px;overflow:visible" width="4.5" height="7.5" viewBox="0 0 4.5 7.5"><path d="M3.8 0.6 L0.9 3.75 L3.8 6.9" fill="none" stroke="#1a1a1a" stroke-width="1.3"/></svg><svg style="position:absolute;left:642.8px;top:207.0px;overflow:visible" width="4.5" height="7.5" viewBox="0 0 4.5 7.5"><path d="M3.8 0.6 L0.9 3.75 L3.8 6.9" fill="none" stroke="#1a1a1a" stroke-width="1.3"/></svg><div style="position:absolute;left:650.5px;top:205.1px;width:40.5px;height:10.799999999999983px;box-sizing:border-box;background:linear-gradient(#eeeef2,#e0e0e6);border-bottom:1px solid #d0d0d6"></div><div class="t" style="left:520.75px;width:300px;text-align:center;top:207.45px;font-size:7.5px;line-height:7.5px;color:#262626;font-weight:400;transform:scaleX(0.93)">Agent</div><div style="position:absolute;left:694.5px;top:194.0px;width:79.29999999999995px;height:8.599999999999994px;box-sizing:border-box;background:transparent;border:1px solid rgba(0,0,0,0.045);border-radius:2px"></div><div class="t" style="left:584.2px;width:300px;text-align:center;top:195.78px;font-size:7.7px;line-height:7.7px;color:#2a2a2a;font-weight:400;transform:scaleX(0.93)">GENERAL</div><div style="position:absolute;left:694.5px;top:206.6px;width:79.29999999999995px;height:7.699999999999989px;box-sizing:border-box;background:transparent;border:1px solid rgba(0,0,0,0.045);border-radius:2px"></div><svg style="position:absolute;left:780.2px;top:194.6px;overflow:visible" width="4.5" height="7.5" viewBox="0 0 4.5 7.5"><path d="M3.8 0.6 L0.9 3.75 L3.8 6.9" fill="none" stroke="#1a1a1a" stroke-width="1.3"/></svg><svg style="position:absolute;left:780.2px;top:206.79999999999998px;overflow:visible" width="4.5" height="7.5" viewBox="0 0 4.5 7.5"><path d="M3.8 0.6 L0.9 3.75 L3.8 6.9" fill="none" stroke="#1a1a1a" stroke-width="1.3"/></svg><div style="position:absolute;left:787.5px;top:198.6px;width:16.2px;height:10.2px;box-sizing:border-box;border:1px solid #7a7a7a;border-radius:2px;background:#fff"></div><div class="t" style="left:645.4px;width:300px;text-align:center;top:201.04px;font-size:6.1px;line-height:6.1px;color:#1a1a1a;font-weight:400;transform:scaleX(0.9);-webkit-text-stroke:0.15px #1a1a1a">Omit</div><div style="position:absolute;left:808px;top:199.79999999999998px;width:7.2px;height:7.3px;box-sizing:border-box;border:1px solid #2a2a2a;background:#fff"></div><svg style="position:absolute;left:822px;top:200.0px;overflow:visible" width="6.5" height="7.5" viewBox="0 0 6.5 7.5"><rect x="2" y="0" width="2.5" height="1" fill="#707070"/><rect x="0" y="1" width="6.5" height="1.2" fill="#707070"/><path d="M0.6 2.5 H5.9 L5.4 7.5 H1.1 Z" fill="#8a8a8a"/><rect x="2" y="3.2" width="0.7" height="3.5" fill="#e8e8e8"/><rect x="3.8" y="3.2" width="0.7" height="3.5" fill="#e8e8e8"/></svg><svg style="position:absolute;left:104px;top:222.10px" width="716" height="2.2"><line x1="0" y1="1.1" x2="716" y2="1.1" stroke="#111" stroke-width="1.65" stroke-dasharray="3.7 3.3"/></svg><div style="position:absolute;left:104.5px;top:224.2px;width:731px;height:34.8px;background:#f2f2f2"></div><div style="position:absolute;left:105.5px;top:227.89999999999998px;width:124.80000000000001px;height:11px;box-sizing:border-box;background:transparent;border-bottom:1.5px solid #9c9c9c;border-radius:0 0 3px 3px"></div><svg style="position:absolute;left:233.5px;top:229.5px;overflow:visible" width="7" height="8" viewBox="0 0 7 8"><path d="M0.8 1.4 Q0.8 0.4 1.8 0.4 L5.2 0.4 Q6.2 0.4 6.2 1.4 L6.2 4.2 Q6.2 5.4 5 5.4 L2 5.4 Q0.8 5.4 0.8 4.2 Z" fill="#f2c46a" stroke="#7a5224" stroke-width="0.8"/><rect x="2.2" y="1.8" width="2.4" height="2.2" fill="#fde7b4"/><path d="M3.2 5.4 L4.6 5.4 L4.1 7.6 Z" fill="#4a4a4a"/></svg><div style="position:absolute;left:243.3px;top:227.89999999999998px;width:69.5px;height:11px;box-sizing:border-box;background:#e6eefa;border-bottom:1.5px solid #9c9c9c;border-radius:0 0 3px 3px"></div><svg style="position:absolute;left:317px;top:229.2px;overflow:visible" width="8" height="8" viewBox="0 0 8 8"><path d="M1.3 0.8 Q0.2 2 1.2 4.2 Q2.8 7 5.2 7.6 Q6.3 7.8 7 7 L5.6 5.4 L4.7 5.9 Q3.2 5.2 2.5 3.4 L3.2 2.6 Z" fill="#e60048"/><path d="M4.2 0.6 Q7 1 7.4 3.8" fill="none" stroke="#f07098" stroke-width="0.9"/><path d="M4.2 2.2 Q5.8 2.5 6 4" fill="none" stroke="#f07098" stroke-width="0.9"/></svg><div style="position:absolute;left:327.8px;top:230.1px;width:40.19999999999999px;height:9px;box-sizing:border-box;background:transparent;border-bottom:1.5px solid #9c9c9c;border-radius:0 0 3px 3px"></div><div style="position:absolute;left:419.7px;top:227.89999999999998px;width:71.10000000000002px;height:11px;box-sizing:border-box;background:#e6eefa;border-bottom:1.5px solid #9c9c9c;border-radius:0 0 3px 3px"></div><svg style="position:absolute;left:494.2px;top:229.2px;overflow:visible" width="8" height="8" viewBox="0 0 8 8"><path d="M1.3 0.8 Q0.2 2 1.2 4.2 Q2.8 7 5.2 7.6 Q6.3 7.8 7 7 L5.6 5.4 L4.7 5.9 Q3.2 5.2 2.5 3.4 L3.2 2.6 Z" fill="#e60048"/><path d="M4.2 0.6 Q7 1 7.4 3.8" fill="none" stroke="#f07098" stroke-width="0.9"/><path d="M4.2 2.2 Q5.8 2.5 6 4" fill="none" stroke="#f07098" stroke-width="0.9"/></svg><div class="t" style="left:105.6px;top:244.04px;font-size:7.4px;line-height:7.4px;color:#151515;font-weight:400;transform:scaleX(0.96);transform-origin:0 50%;-webkit-text-stroke:0.12px #151515">Notes:</div><div style="position:absolute;left:130.7px;top:242.89999999999998px;width:227.7px;height:9px;box-sizing:border-box;background:transparent;border-bottom:1.5px solid #9c9c9c;border-radius:0 0 3px 3px"></div><svg style="position:absolute;left:359.8px;top:243.1px;overflow:visible" width="8.5" height="8" viewBox="0 0 8.5 8"><circle cx="1.7" cy="1.6" r="0.85" fill="#7ab8f0"/><circle cx="4.5" cy="1.6" r="0.85" fill="#7ac4f0"/><circle cx="1.7" cy="4.4" r="0.85" fill="#7ab8f0"/><circle cx="4.5" cy="4.4" r="0.85" fill="#60c8e8"/><line x1="5.8" y1="5.8" x2="7.8" y2="7.6" stroke="#3c94e4" stroke-width="1.6" stroke-linecap="round"/></svg><div style="position:absolute;left:371px;top:241.8px;width:41px;height:9.599999999999994px;box-sizing:border-box;background:linear-gradient(#eeeef2,#e0e0e6);border-bottom:1px solid #d0d0d6"></div><div class="t" style="left:241.5px;width:300px;text-align:center;top:242.95px;font-size:7.5px;line-height:7.5px;color:#262626;font-weight:400;transform:scaleX(0.93)">Group</div><div style="position:absolute;left:414.5px;top:242.0px;width:74.5px;height:9.0px;box-sizing:border-box;background:transparent;border:1px solid rgba(0,0,0,0.045);border-radius:2px"></div><svg style="position:absolute;left:493px;top:243.0px;overflow:visible" width="4.5" height="7.5" viewBox="0 0 4.5 7.5"><path d="M3.8 0.6 L0.9 3.75 L3.8 6.9" fill="none" stroke="#1a1a1a" stroke-width="1.3"/></svg><div style="position:absolute;left:501px;top:242.0px;width:6.5px;height:9.5px;background:linear-gradient(#f4f4f4,#dcdcdc)"></div><div class="t" style="left:354.3px;width:300px;text-align:center;top:243.91px;font-size:6.6px;line-height:6.6px;color:#333;font-weight:700;">M</div><div style="position:absolute;left:510.7px;top:242.0px;width:75.80000000000001px;height:9.0px;box-sizing:border-box;background:transparent;border:1px solid rgba(0,0,0,0.045);border-radius:2px"></div><svg style="position:absolute;left:589.4px;top:242.8px;overflow:visible" width="4.5" height="7.5" viewBox="0 0 4.5 7.5"><path d="M3.8 0.6 L0.9 3.75 L3.8 6.9" fill="none" stroke="#1a1a1a" stroke-width="1.3"/></svg><svg style="position:absolute;left:642.8px;top:242.8px;overflow:visible" width="4.5" height="7.5" viewBox="0 0 4.5 7.5"><path d="M3.8 0.6 L0.9 3.75 L3.8 6.9" fill="none" stroke="#1a1a1a" stroke-width="1.3"/></svg><div style="position:absolute;left:650.5px;top:240.9px;width:40.5px;height:10.799999999999983px;box-sizing:border-box;background:linear-gradient(#eeeef2,#e0e0e6);border-bottom:1px solid #d0d0d6"></div><div class="t" style="left:520.75px;width:300px;text-align:center;top:243.25px;font-size:7.5px;line-height:7.5px;color:#262626;font-weight:400;transform:scaleX(0.93)">Agent</div><div style="position:absolute;left:694.5px;top:229.8px;width:79.29999999999995px;height:8.599999999999994px;box-sizing:border-box;background:transparent;border:1px solid rgba(0,0,0,0.045);border-radius:2px"></div><div class="t" style="left:584.2px;width:300px;text-align:center;top:231.58px;font-size:7.7px;line-height:7.7px;color:#2a2a2a;font-weight:400;transform:scaleX(0.93)">GENERAL</div><div style="position:absolute;left:694.5px;top:242.4px;width:79.29999999999995px;height:7.699999999999989px;box-sizing:border-box;background:transparent;border:1px solid rgba(0,0,0,0.045);border-radius:2px"></div><svg style="position:absolute;left:780.2px;top:230.4px;overflow:visible" width="4.5" height="7.5" viewBox="0 0 4.5 7.5"><path d="M3.8 0.6 L0.9 3.75 L3.8 6.9" fill="none" stroke="#1a1a1a" stroke-width="1.3"/></svg><svg style="position:absolute;left:780.2px;top:242.6px;overflow:visible" width="4.5" height="7.5" viewBox="0 0 4.5 7.5"><path d="M3.8 0.6 L0.9 3.75 L3.8 6.9" fill="none" stroke="#1a1a1a" stroke-width="1.3"/></svg><div style="position:absolute;left:787.5px;top:234.4px;width:16.2px;height:10.2px;box-sizing:border-box;border:1px solid #7a7a7a;border-radius:2px;background:#fff"></div><div class="t" style="left:645.4px;width:300px;text-align:center;top:236.84px;font-size:6.1px;line-height:6.1px;color:#1a1a1a;font-weight:400;transform:scaleX(0.9);-webkit-text-stroke:0.15px #1a1a1a">Omit</div><div style="position:absolute;left:808px;top:235.6px;width:7.2px;height:7.3px;box-sizing:border-box;border:1px solid #2a2a2a;background:#fff"></div><svg style="position:absolute;left:822px;top:235.8px;overflow:visible" width="6.5" height="7.5" viewBox="0 0 6.5 7.5"><rect x="2" y="0" width="2.5" height="1" fill="#707070"/><rect x="0" y="1" width="6.5" height="1.2" fill="#707070"/><path d="M0.6 2.5 H5.9 L5.4 7.5 H1.1 Z" fill="#8a8a8a"/><rect x="2" y="3.2" width="0.7" height="3.5" fill="#e8e8e8"/><rect x="3.8" y="3.2" width="0.7" height="3.5" fill="#e8e8e8"/></svg><svg style="position:absolute;left:104px;top:257.90px" width="716" height="2.2"><line x1="0" y1="1.1" x2="716" y2="1.1" stroke="#111" stroke-width="1.65" stroke-dasharray="3.7 3.3"/></svg><div style="position:absolute;left:105.5px;top:263.69999999999993px;width:124.80000000000001px;height:11px;box-sizing:border-box;background:transparent;border-bottom:1.5px solid #9c9c9c;border-radius:0 0 3px 3px"></div><svg style="position:absolute;left:233.5px;top:265.29999999999995px;overflow:visible" width="7" height="8" viewBox="0 0 7 8"><path d="M0.8 1.4 Q0.8 0.4 1.8 0.4 L5.2 0.4 Q6.2 0.4 6.2 1.4 L6.2 4.2 Q6.2 5.4 5 5.4 L2 5.4 Q0.8 5.4 0.8 4.2 Z" fill="#f2c46a" stroke="#7a5224" stroke-width="0.8"/><rect x="2.2" y="1.8" width="2.4" height="2.2" fill="#fde7b4"/><path d="M3.2 5.4 L4.6 5.4 L4.1 7.6 Z" fill="#4a4a4a"/></svg><div style="position:absolute;left:243.3px;top:263.69999999999993px;width:69.5px;height:11px;box-sizing:border-box;background:transparent;border-bottom:1.5px solid #9c9c9c;border-radius:0 0 3px 3px"></div><svg style="position:absolute;left:317px;top:264.99999999999994px;overflow:visible" width="8" height="8" viewBox="0 0 8 8"><path d="M1.3 0.8 Q0.2 2 1.2 4.2 Q2.8 7 5.2 7.6 Q6.3 7.8 7 7 L5.6 5.4 L4.7 5.9 Q3.2 5.2 2.5 3.4 L3.2 2.6 Z" fill="#e60048"/><path d="M4.2 0.6 Q7 1 7.4 3.8" fill="none" stroke="#f07098" stroke-width="0.9"/><path d="M4.2 2.2 Q5.8 2.5 6 4" fill="none" stroke="#f07098" stroke-width="0.9"/></svg><div style="position:absolute;left:327.8px;top:265.8999999999999px;width:40.19999999999999px;height:9px;box-sizing:border-box;background:transparent;border-bottom:1.5px solid #9c9c9c;border-radius:0 0 3px 3px"></div><div style="position:absolute;left:419.7px;top:263.69999999999993px;width:71.10000000000002px;height:11px;box-sizing:border-box;background:transparent;border-bottom:1.5px solid #9c9c9c;border-radius:0 0 3px 3px"></div><svg style="position:absolute;left:494.2px;top:264.99999999999994px;overflow:visible" width="8" height="8" viewBox="0 0 8 8"><path d="M1.3 0.8 Q0.2 2 1.2 4.2 Q2.8 7 5.2 7.6 Q6.3 7.8 7 7 L5.6 5.4 L4.7 5.9 Q3.2 5.2 2.5 3.4 L3.2 2.6 Z" fill="#e60048"/><path d="M4.2 0.6 Q7 1 7.4 3.8" fill="none" stroke="#f07098" stroke-width="0.9"/><path d="M4.2 2.2 Q5.8 2.5 6 4" fill="none" stroke="#f07098" stroke-width="0.9"/></svg><div class="t" style="left:105.6px;top:279.84px;font-size:7.4px;line-height:7.4px;color:#151515;font-weight:400;transform:scaleX(0.96);transform-origin:0 50%;-webkit-text-stroke:0.12px #151515">Notes:</div><div style="position:absolute;left:130.7px;top:278.69999999999993px;width:227.7px;height:9px;box-sizing:border-box;background:transparent;border-bottom:1.5px solid #9c9c9c;border-radius:0 0 3px 3px"></div><svg style="position:absolute;left:359.8px;top:278.9px;overflow:visible" width="8.5" height="8" viewBox="0 0 8.5 8"><circle cx="1.7" cy="1.6" r="0.85" fill="#7ab8f0"/><circle cx="4.5" cy="1.6" r="0.85" fill="#7ac4f0"/><circle cx="1.7" cy="4.4" r="0.85" fill="#7ab8f0"/><circle cx="4.5" cy="4.4" r="0.85" fill="#60c8e8"/><line x1="5.8" y1="5.8" x2="7.8" y2="7.6" stroke="#3c94e4" stroke-width="1.6" stroke-linecap="round"/></svg><div style="position:absolute;left:371px;top:277.59999999999997px;width:41px;height:9.599999999999966px;box-sizing:border-box;background:linear-gradient(#eeeef2,#e0e0e6);border-bottom:1px solid #d0d0d6"></div><div class="t" style="left:241.5px;width:300px;text-align:center;top:278.75px;font-size:7.5px;line-height:7.5px;color:#262626;font-weight:400;transform:scaleX(0.93)">Group</div><div style="position:absolute;left:414.5px;top:277.79999999999995px;width:74.5px;height:9.0px;box-sizing:border-box;background:transparent;border:1px solid rgba(0,0,0,0.045);border-radius:2px"></div><svg style="position:absolute;left:493px;top:278.79999999999995px;overflow:visible" width="4.5" height="7.5" viewBox="0 0 4.5 7.5"><path d="M3.8 0.6 L0.9 3.75 L3.8 6.9" fill="none" stroke="#1a1a1a" stroke-width="1.3"/></svg><div style="position:absolute;left:501px;top:277.79999999999995px;width:6.5px;height:9.5px;background:linear-gradient(#f4f4f4,#dcdcdc)"></div><div class="t" style="left:354.3px;width:300px;text-align:center;top:279.71px;font-size:6.6px;line-height:6.6px;color:#333;font-weight:700;">M</div><div style="position:absolute;left:510.7px;top:277.79999999999995px;width:75.80000000000001px;height:9.0px;box-sizing:border-box;background:transparent;border:1px solid rgba(0,0,0,0.045);border-radius:2px"></div><svg style="position:absolute;left:589.4px;top:278.59999999999997px;overflow:visible" width="4.5" height="7.5" viewBox="0 0 4.5 7.5"><path d="M3.8 0.6 L0.9 3.75 L3.8 6.9" fill="none" stroke="#1a1a1a" stroke-width="1.3"/></svg><svg style="position:absolute;left:642.8px;top:278.59999999999997px;overflow:visible" width="4.5" height="7.5" viewBox="0 0 4.5 7.5"><path d="M3.8 0.6 L0.9 3.75 L3.8 6.9" fill="none" stroke="#1a1a1a" stroke-width="1.3"/></svg><div style="position:absolute;left:650.5px;top:276.69999999999993px;width:40.5px;height:10.800000000000011px;box-sizing:border-box;background:linear-gradient(#eeeef2,#e0e0e6);border-bottom:1px solid #d0d0d6"></div><div class="t" style="left:520.75px;width:300px;text-align:center;top:279.05px;font-size:7.5px;line-height:7.5px;color:#262626;font-weight:400;transform:scaleX(0.93)">Agent</div><div style="position:absolute;left:694.5px;top:265.59999999999997px;width:79.29999999999995px;height:8.599999999999966px;box-sizing:border-box;background:transparent;border:1px solid rgba(0,0,0,0.045);border-radius:2px"></div><div class="t" style="left:584.2px;width:300px;text-align:center;top:267.38px;font-size:7.7px;line-height:7.7px;color:#2a2a2a;font-weight:400;transform:scaleX(0.93)">GENERAL</div><div style="position:absolute;left:694.5px;top:278.19999999999993px;width:79.29999999999995px;height:7.7000000000000455px;box-sizing:border-box;background:transparent;border:1px solid rgba(0,0,0,0.045);border-radius:2px"></div><svg style="position:absolute;left:780.2px;top:266.19999999999993px;overflow:visible" width="4.5" height="7.5" viewBox="0 0 4.5 7.5"><path d="M3.8 0.6 L0.9 3.75 L3.8 6.9" fill="none" stroke="#1a1a1a" stroke-width="1.3"/></svg><svg style="position:absolute;left:780.2px;top:278.4px;overflow:visible" width="4.5" height="7.5" viewBox="0 0 4.5 7.5"><path d="M3.8 0.6 L0.9 3.75 L3.8 6.9" fill="none" stroke="#1a1a1a" stroke-width="1.3"/></svg><div style="position:absolute;left:787.5px;top:270.19999999999993px;width:16.2px;height:10.2px;box-sizing:border-box;border:1px solid #7a7a7a;border-radius:2px;background:#fff"></div><div class="t" style="left:645.4px;width:300px;text-align:center;top:272.64px;font-size:6.1px;line-height:6.1px;color:#1a1a1a;font-weight:400;transform:scaleX(0.9);-webkit-text-stroke:0.15px #1a1a1a">Omit</div><div style="position:absolute;left:808px;top:271.4px;width:7.2px;height:7.3px;box-sizing:border-box;border:1px solid #2a2a2a;background:#fff"></div><svg style="position:absolute;left:822px;top:271.59999999999997px;overflow:visible" width="6.5" height="7.5" viewBox="0 0 6.5 7.5"><rect x="2" y="0" width="2.5" height="1" fill="#707070"/><rect x="0" y="1" width="6.5" height="1.2" fill="#707070"/><path d="M0.6 2.5 H5.9 L5.4 7.5 H1.1 Z" fill="#8a8a8a"/><rect x="2" y="3.2" width="0.7" height="3.5" fill="#e8e8e8"/><rect x="3.8" y="3.2" width="0.7" height="3.5" fill="#e8e8e8"/></svg><svg style="position:absolute;left:104px;top:293.70px" width="716" height="2.2"><line x1="0" y1="1.1" x2="716" y2="1.1" stroke="#111" stroke-width="1.65" stroke-dasharray="3.7 3.3"/></svg><div style="position:absolute;left:104.5px;top:295.79999999999995px;width:731px;height:34.8px;background:#f2f2f2"></div><div style="position:absolute;left:105.5px;top:299.49999999999994px;width:124.80000000000001px;height:11px;box-sizing:border-box;background:transparent;border-bottom:1.5px solid #9c9c9c;border-radius:0 0 3px 3px"></div><svg style="position:absolute;left:233.5px;top:301.09999999999997px;overflow:visible" width="7" height="8" viewBox="0 0 7 8"><path d="M0.8 1.4 Q0.8 0.4 1.8 0.4 L5.2 0.4 Q6.2 0.4 6.2 1.4 L6.2 4.2 Q6.2 5.4 5 5.4 L2 5.4 Q0.8 5.4 0.8 4.2 Z" fill="#f2c46a" stroke="#7a5224" stroke-width="0.8"/><rect x="2.2" y="1.8" width="2.4" height="2.2" fill="#fde7b4"/><path d="M3.2 5.4 L4.6 5.4 L4.1 7.6 Z" fill="#4a4a4a"/></svg><div style="position:absolute;left:243.3px;top:299.49999999999994px;width:69.5px;height:11px;box-sizing:border-box;background:#e6eefa;border-bottom:1.5px solid #9c9c9c;border-radius:0 0 3px 3px"></div><svg style="position:absolute;left:317px;top:300.79999999999995px;overflow:visible" width="8" height="8" viewBox="0 0 8 8"><path d="M1.3 0.8 Q0.2 2 1.2 4.2 Q2.8 7 5.2 7.6 Q6.3 7.8 7 7 L5.6 5.4 L4.7 5.9 Q3.2 5.2 2.5 3.4 L3.2 2.6 Z" fill="#e60048"/><path d="M4.2 0.6 Q7 1 7.4 3.8" fill="none" stroke="#f07098" stroke-width="0.9"/><path d="M4.2 2.2 Q5.8 2.5 6 4" fill="none" stroke="#f07098" stroke-width="0.9"/></svg><div style="position:absolute;left:327.8px;top:301.69999999999993px;width:40.19999999999999px;height:9px;box-sizing:border-box;background:transparent;border-bottom:1.5px solid #9c9c9c;border-radius:0 0 3px 3px"></div><div style="position:absolute;left:419.7px;top:299.49999999999994px;width:71.10000000000002px;height:11px;box-sizing:border-box;background:#e6eefa;border-bottom:1.5px solid #9c9c9c;border-radius:0 0 3px 3px"></div><svg style="position:absolute;left:494.2px;top:300.79999999999995px;overflow:visible" width="8" height="8" viewBox="0 0 8 8"><path d="M1.3 0.8 Q0.2 2 1.2 4.2 Q2.8 7 5.2 7.6 Q6.3 7.8 7 7 L5.6 5.4 L4.7 5.9 Q3.2 5.2 2.5 3.4 L3.2 2.6 Z" fill="#e60048"/><path d="M4.2 0.6 Q7 1 7.4 3.8" fill="none" stroke="#f07098" stroke-width="0.9"/><path d="M4.2 2.2 Q5.8 2.5 6 4" fill="none" stroke="#f07098" stroke-width="0.9"/></svg><div class="t" style="left:105.6px;top:315.64px;font-size:7.4px;line-height:7.4px;color:#151515;font-weight:400;transform:scaleX(0.96);transform-origin:0 50%;-webkit-text-stroke:0.12px #151515">Notes:</div><div style="position:absolute;left:130.7px;top:314.49999999999994px;width:227.7px;height:9px;box-sizing:border-box;background:transparent;border-bottom:1.5px solid #9c9c9c;border-radius:0 0 3px 3px"></div><svg style="position:absolute;left:359.8px;top:314.7px;overflow:visible" width="8.5" height="8" viewBox="0 0 8.5 8"><circle cx="1.7" cy="1.6" r="0.85" fill="#7ab8f0"/><circle cx="4.5" cy="1.6" r="0.85" fill="#7ac4f0"/><circle cx="1.7" cy="4.4" r="0.85" fill="#7ab8f0"/><circle cx="4.5" cy="4.4" r="0.85" fill="#60c8e8"/><line x1="5.8" y1="5.8" x2="7.8" y2="7.6" stroke="#3c94e4" stroke-width="1.6" stroke-linecap="round"/></svg><div style="position:absolute;left:371px;top:313.4px;width:41px;height:9.599999999999966px;box-sizing:border-box;background:linear-gradient(#eeeef2,#e0e0e6);border-bottom:1px solid #d0d0d6"></div><div class="t" style="left:241.5px;width:300px;text-align:center;top:314.55px;font-size:7.5px;line-height:7.5px;color:#262626;font-weight:400;transform:scaleX(0.93)">Group</div><div style="position:absolute;left:414.5px;top:313.59999999999997px;width:74.5px;height:9.0px;box-sizing:border-box;background:transparent;border:1px solid rgba(0,0,0,0.045);border-radius:2px"></div><svg style="position:absolute;left:493px;top:314.59999999999997px;overflow:visible" width="4.5" height="7.5" viewBox="0 0 4.5 7.5"><path d="M3.8 0.6 L0.9 3.75 L3.8 6.9" fill="none" stroke="#1a1a1a" stroke-width="1.3"/></svg><div style="position:absolute;left:501px;top:313.59999999999997px;width:6.5px;height:9.5px;background:linear-gradient(#f4f4f4,#dcdcdc)"></div><div class="t" style="left:354.3px;width:300px;text-align:center;top:315.51px;font-size:6.6px;line-height:6.6px;color:#333;font-weight:700;">M</div><div style="position:absolute;left:510.7px;top:313.59999999999997px;width:75.80000000000001px;height:9.0px;box-sizing:border-box;background:transparent;border:1px solid rgba(0,0,0,0.045);border-radius:2px"></div><svg style="position:absolute;left:589.4px;top:314.4px;overflow:visible" width="4.5" height="7.5" viewBox="0 0 4.5 7.5"><path d="M3.8 0.6 L0.9 3.75 L3.8 6.9" fill="none" stroke="#1a1a1a" stroke-width="1.3"/></svg><svg style="position:absolute;left:642.8px;top:314.4px;overflow:visible" width="4.5" height="7.5" viewBox="0 0 4.5 7.5"><path d="M3.8 0.6 L0.9 3.75 L3.8 6.9" fill="none" stroke="#1a1a1a" stroke-width="1.3"/></svg><div style="position:absolute;left:650.5px;top:312.49999999999994px;width:40.5px;height:10.800000000000011px;box-sizing:border-box;background:linear-gradient(#eeeef2,#e0e0e6);border-bottom:1px solid #d0d0d6"></div><div class="t" style="left:520.75px;width:300px;text-align:center;top:314.85px;font-size:7.5px;line-height:7.5px;color:#262626;font-weight:400;transform:scaleX(0.93)">Agent</div><div style="position:absolute;left:694.5px;top:301.4px;width:79.29999999999995px;height:8.599999999999966px;box-sizing:border-box;background:transparent;border:1px solid rgba(0,0,0,0.045);border-radius:2px"></div><div class="t" style="left:584.2px;width:300px;text-align:center;top:303.18px;font-size:7.7px;line-height:7.7px;color:#2a2a2a;font-weight:400;transform:scaleX(0.93)">GENERAL</div><div style="position:absolute;left:694.5px;top:313.99999999999994px;width:79.29999999999995px;height:7.7000000000000455px;box-sizing:border-box;background:transparent;border:1px solid rgba(0,0,0,0.045);border-radius:2px"></div><svg style="position:absolute;left:780.2px;top:301.99999999999994px;overflow:visible" width="4.5" height="7.5" viewBox="0 0 4.5 7.5"><path d="M3.8 0.6 L0.9 3.75 L3.8 6.9" fill="none" stroke="#1a1a1a" stroke-width="1.3"/></svg><svg style="position:absolute;left:780.2px;top:314.2px;overflow:visible" width="4.5" height="7.5" viewBox="0 0 4.5 7.5"><path d="M3.8 0.6 L0.9 3.75 L3.8 6.9" fill="none" stroke="#1a1a1a" stroke-width="1.3"/></svg><div style="position:absolute;left:787.5px;top:305.99999999999994px;width:16.2px;height:10.2px;box-sizing:border-box;border:1px solid #7a7a7a;border-radius:2px;background:#fff"></div><div class="t" style="left:645.4px;width:300px;text-align:center;top:308.44px;font-size:6.1px;line-height:6.1px;color:#1a1a1a;font-weight:400;transform:scaleX(0.9);-webkit-text-stroke:0.15px #1a1a1a">Omit</div><div style="position:absolute;left:808px;top:307.2px;width:7.2px;height:7.3px;box-sizing:border-box;border:1px solid #2a2a2a;background:#fff"></div><svg style="position:absolute;left:822px;top:307.4px;overflow:visible" width="6.5" height="7.5" viewBox="0 0 6.5 7.5"><rect x="2" y="0" width="2.5" height="1" fill="#707070"/><rect x="0" y="1" width="6.5" height="1.2" fill="#707070"/><path d="M0.6 2.5 H5.9 L5.4 7.5 H1.1 Z" fill="#8a8a8a"/><rect x="2" y="3.2" width="0.7" height="3.5" fill="#e8e8e8"/><rect x="3.8" y="3.2" width="0.7" height="3.5" fill="#e8e8e8"/></svg><svg style="position:absolute;left:104px;top:329.50px" width="716" height="2.2"><line x1="0" y1="1.1" x2="716" y2="1.1" stroke="#111" stroke-width="1.65" stroke-dasharray="3.7 3.3"/></svg><div style="position:absolute;left:105.5px;top:335.29999999999995px;width:124.80000000000001px;height:11px;box-sizing:border-box;background:transparent;border-bottom:1.5px solid #9c9c9c;border-radius:0 0 3px 3px"></div><svg style="position:absolute;left:233.5px;top:336.9px;overflow:visible" width="7" height="8" viewBox="0 0 7 8"><path d="M0.8 1.4 Q0.8 0.4 1.8 0.4 L5.2 0.4 Q6.2 0.4 6.2 1.4 L6.2 4.2 Q6.2 5.4 5 5.4 L2 5.4 Q0.8 5.4 0.8 4.2 Z" fill="#f2c46a" stroke="#7a5224" stroke-width="0.8"/><rect x="2.2" y="1.8" width="2.4" height="2.2" fill="#fde7b4"/><path d="M3.2 5.4 L4.6 5.4 L4.1 7.6 Z" fill="#4a4a4a"/></svg><div style="position:absolute;left:243.3px;top:335.29999999999995px;width:69.5px;height:11px;box-sizing:border-box;background:transparent;border-bottom:1.5px solid #9c9c9c;border-radius:0 0 3px 3px"></div><svg style="position:absolute;left:317px;top:336.59999999999997px;overflow:visible" width="8" height="8" viewBox="0 0 8 8"><path d="M1.3 0.8 Q0.2 2 1.2 4.2 Q2.8 7 5.2 7.6 Q6.3 7.8 7 7 L5.6 5.4 L4.7 5.9 Q3.2 5.2 2.5 3.4 L3.2 2.6 Z" fill="#e60048"/><path d="M4.2 0.6 Q7 1 7.4 3.8" fill="none" stroke="#f07098" stroke-width="0.9"/><path d="M4.2 2.2 Q5.8 2.5 6 4" fill="none" stroke="#f07098" stroke-width="0.9"/></svg><div style="position:absolute;left:327.8px;top:337.49999999999994px;width:40.19999999999999px;height:9px;box-sizing:border-box;background:transparent;border-bottom:1.5px solid #9c9c9c;border-radius:0 0 3px 3px"></div><div style="position:absolute;left:419.7px;top:335.29999999999995px;width:71.10000000000002px;height:11px;box-sizing:border-box;background:transparent;border-bottom:1.5px solid #9c9c9c;border-radius:0 0 3px 3px"></div><svg style="position:absolute;left:494.2px;top:336.59999999999997px;overflow:visible" width="8" height="8" viewBox="0 0 8 8"><path d="M1.3 0.8 Q0.2 2 1.2 4.2 Q2.8 7 5.2 7.6 Q6.3 7.8 7 7 L5.6 5.4 L4.7 5.9 Q3.2 5.2 2.5 3.4 L3.2 2.6 Z" fill="#e60048"/><path d="M4.2 0.6 Q7 1 7.4 3.8" fill="none" stroke="#f07098" stroke-width="0.9"/><path d="M4.2 2.2 Q5.8 2.5 6 4" fill="none" stroke="#f07098" stroke-width="0.9"/></svg><div class="t" style="left:105.6px;top:351.44px;font-size:7.4px;line-height:7.4px;color:#151515;font-weight:400;transform:scaleX(0.96);transform-origin:0 50%;-webkit-text-stroke:0.12px #151515">Notes:</div><div style="position:absolute;left:130.7px;top:350.29999999999995px;width:227.7px;height:9px;box-sizing:border-box;background:transparent;border-bottom:1.5px solid #9c9c9c;border-radius:0 0 3px 3px"></div><svg style="position:absolute;left:359.8px;top:350.5px;overflow:visible" width="8.5" height="8" viewBox="0 0 8.5 8"><circle cx="1.7" cy="1.6" r="0.85" fill="#7ab8f0"/><circle cx="4.5" cy="1.6" r="0.85" fill="#7ac4f0"/><circle cx="1.7" cy="4.4" r="0.85" fill="#7ab8f0"/><circle cx="4.5" cy="4.4" r="0.85" fill="#60c8e8"/><line x1="5.8" y1="5.8" x2="7.8" y2="7.6" stroke="#3c94e4" stroke-width="1.6" stroke-linecap="round"/></svg><div style="position:absolute;left:371px;top:349.2px;width:41px;height:9.599999999999966px;box-sizing:border-box;background:linear-gradient(#eeeef2,#e0e0e6);border-bottom:1px solid #d0d0d6"></div><div class="t" style="left:241.5px;width:300px;text-align:center;top:350.35px;font-size:7.5px;line-height:7.5px;color:#262626;font-weight:400;transform:scaleX(0.93)">Group</div><div style="position:absolute;left:414.5px;top:349.4px;width:74.5px;height:9.0px;box-sizing:border-box;background:transparent;border:1px solid rgba(0,0,0,0.045);border-radius:2px"></div><svg style="position:absolute;left:493px;top:350.4px;overflow:visible" width="4.5" height="7.5" viewBox="0 0 4.5 7.5"><path d="M3.8 0.6 L0.9 3.75 L3.8 6.9" fill="none" stroke="#1a1a1a" stroke-width="1.3"/></svg><div style="position:absolute;left:501px;top:349.4px;width:6.5px;height:9.5px;background:linear-gradient(#f4f4f4,#dcdcdc)"></div><div class="t" style="left:354.3px;width:300px;text-align:center;top:351.31px;font-size:6.6px;line-height:6.6px;color:#333;font-weight:700;">M</div><div style="position:absolute;left:510.7px;top:349.4px;width:75.80000000000001px;height:9.0px;box-sizing:border-box;background:transparent;border:1px solid rgba(0,0,0,0.045);border-radius:2px"></div><svg style="position:absolute;left:589.4px;top:350.2px;overflow:visible" width="4.5" height="7.5" viewBox="0 0 4.5 7.5"><path d="M3.8 0.6 L0.9 3.75 L3.8 6.9" fill="none" stroke="#1a1a1a" stroke-width="1.3"/></svg><svg style="position:absolute;left:642.8px;top:350.2px;overflow:visible" width="4.5" height="7.5" viewBox="0 0 4.5 7.5"><path d="M3.8 0.6 L0.9 3.75 L3.8 6.9" fill="none" stroke="#1a1a1a" stroke-width="1.3"/></svg><div style="position:absolute;left:650.5px;top:348.29999999999995px;width:40.5px;height:10.800000000000011px;box-sizing:border-box;background:linear-gradient(#eeeef2,#e0e0e6);border-bottom:1px solid #d0d0d6"></div><div class="t" style="left:520.75px;width:300px;text-align:center;top:350.65px;font-size:7.5px;line-height:7.5px;color:#262626;font-weight:400;transform:scaleX(0.93)">Agent</div><div style="position:absolute;left:694.5px;top:337.2px;width:79.29999999999995px;height:8.599999999999966px;box-sizing:border-box;background:transparent;border:1px solid rgba(0,0,0,0.045);border-radius:2px"></div><div class="t" style="left:584.2px;width:300px;text-align:center;top:338.98px;font-size:7.7px;line-height:7.7px;color:#2a2a2a;font-weight:400;transform:scaleX(0.93)">GENERAL</div><div style="position:absolute;left:694.5px;top:349.79999999999995px;width:79.29999999999995px;height:7.7000000000000455px;box-sizing:border-box;background:transparent;border:1px solid rgba(0,0,0,0.045);border-radius:2px"></div><svg style="position:absolute;left:780.2px;top:337.79999999999995px;overflow:visible" width="4.5" height="7.5" viewBox="0 0 4.5 7.5"><path d="M3.8 0.6 L0.9 3.75 L3.8 6.9" fill="none" stroke="#1a1a1a" stroke-width="1.3"/></svg><svg style="position:absolute;left:780.2px;top:350.0px;overflow:visible" width="4.5" height="7.5" viewBox="0 0 4.5 7.5"><path d="M3.8 0.6 L0.9 3.75 L3.8 6.9" fill="none" stroke="#1a1a1a" stroke-width="1.3"/></svg><div style="position:absolute;left:787.5px;top:341.79999999999995px;width:16.2px;height:10.2px;box-sizing:border-box;border:1px solid #7a7a7a;border-radius:2px;background:#fff"></div><div class="t" style="left:645.4px;width:300px;text-align:center;top:344.24px;font-size:6.1px;line-height:6.1px;color:#1a1a1a;font-weight:400;transform:scaleX(0.9);-webkit-text-stroke:0.15px #1a1a1a">Omit</div><div style="position:absolute;left:808px;top:343.0px;width:7.2px;height:7.3px;box-sizing:border-box;border:1px solid #2a2a2a;background:#fff"></div><svg style="position:absolute;left:822px;top:343.2px;overflow:visible" width="6.5" height="7.5" viewBox="0 0 6.5 7.5"><rect x="2" y="0" width="2.5" height="1" fill="#707070"/><rect x="0" y="1" width="6.5" height="1.2" fill="#707070"/><path d="M0.6 2.5 H5.9 L5.4 7.5 H1.1 Z" fill="#8a8a8a"/><rect x="2" y="3.2" width="0.7" height="3.5" fill="#e8e8e8"/><rect x="3.8" y="3.2" width="0.7" height="3.5" fill="#e8e8e8"/></svg><svg style="position:absolute;left:104px;top:365.30px" width="716" height="2.2"><line x1="0" y1="1.1" x2="716" y2="1.1" stroke="#111" stroke-width="1.65" stroke-dasharray="3.7 3.3"/></svg><div style="position:absolute;left:104.5px;top:367.4px;width:731px;height:34.8px;background:#f2f2f2"></div><div style="position:absolute;left:105.5px;top:371.09999999999997px;width:124.80000000000001px;height:11px;box-sizing:border-box;background:transparent;border-bottom:1.5px solid #9c9c9c;border-radius:0 0 3px 3px"></div><svg style="position:absolute;left:233.5px;top:372.7px;overflow:visible" width="7" height="8" viewBox="0 0 7 8"><path d="M0.8 1.4 Q0.8 0.4 1.8 0.4 L5.2 0.4 Q6.2 0.4 6.2 1.4 L6.2 4.2 Q6.2 5.4 5 5.4 L2 5.4 Q0.8 5.4 0.8 4.2 Z" fill="#f2c46a" stroke="#7a5224" stroke-width="0.8"/><rect x="2.2" y="1.8" width="2.4" height="2.2" fill="#fde7b4"/><path d="M3.2 5.4 L4.6 5.4 L4.1 7.6 Z" fill="#4a4a4a"/></svg><div style="position:absolute;left:243.3px;top:371.09999999999997px;width:69.5px;height:11px;box-sizing:border-box;background:#e6eefa;border-bottom:1.5px solid #9c9c9c;border-radius:0 0 3px 3px"></div><svg style="position:absolute;left:317px;top:372.4px;overflow:visible" width="8" height="8" viewBox="0 0 8 8"><path d="M1.3 0.8 Q0.2 2 1.2 4.2 Q2.8 7 5.2 7.6 Q6.3 7.8 7 7 L5.6 5.4 L4.7 5.9 Q3.2 5.2 2.5 3.4 L3.2 2.6 Z" fill="#e60048"/><path d="M4.2 0.6 Q7 1 7.4 3.8" fill="none" stroke="#f07098" stroke-width="0.9"/><path d="M4.2 2.2 Q5.8 2.5 6 4" fill="none" stroke="#f07098" stroke-width="0.9"/></svg><div style="position:absolute;left:327.8px;top:373.29999999999995px;width:40.19999999999999px;height:9px;box-sizing:border-box;background:transparent;border-bottom:1.5px solid #9c9c9c;border-radius:0 0 3px 3px"></div><div style="position:absolute;left:419.7px;top:371.09999999999997px;width:71.10000000000002px;height:11px;box-sizing:border-box;background:#e6eefa;border-bottom:1.5px solid #9c9c9c;border-radius:0 0 3px 3px"></div><svg style="position:absolute;left:494.2px;top:372.4px;overflow:visible" width="8" height="8" viewBox="0 0 8 8"><path d="M1.3 0.8 Q0.2 2 1.2 4.2 Q2.8 7 5.2 7.6 Q6.3 7.8 7 7 L5.6 5.4 L4.7 5.9 Q3.2 5.2 2.5 3.4 L3.2 2.6 Z" fill="#e60048"/><path d="M4.2 0.6 Q7 1 7.4 3.8" fill="none" stroke="#f07098" stroke-width="0.9"/><path d="M4.2 2.2 Q5.8 2.5 6 4" fill="none" stroke="#f07098" stroke-width="0.9"/></svg><div class="t" style="left:105.6px;top:387.24px;font-size:7.4px;line-height:7.4px;color:#151515;font-weight:400;transform:scaleX(0.96);transform-origin:0 50%;-webkit-text-stroke:0.12px #151515">Notes:</div><div style="position:absolute;left:130.7px;top:386.09999999999997px;width:227.7px;height:9px;box-sizing:border-box;background:transparent;border-bottom:1.5px solid #9c9c9c;border-radius:0 0 3px 3px"></div><svg style="position:absolute;left:359.8px;top:386.3px;overflow:visible" width="8.5" height="8" viewBox="0 0 8.5 8"><circle cx="1.7" cy="1.6" r="0.85" fill="#7ab8f0"/><circle cx="4.5" cy="1.6" r="0.85" fill="#7ac4f0"/><circle cx="1.7" cy="4.4" r="0.85" fill="#7ab8f0"/><circle cx="4.5" cy="4.4" r="0.85" fill="#60c8e8"/><line x1="5.8" y1="5.8" x2="7.8" y2="7.6" stroke="#3c94e4" stroke-width="1.6" stroke-linecap="round"/></svg><div style="position:absolute;left:371px;top:385.0px;width:41px;height:9.599999999999966px;box-sizing:border-box;background:linear-gradient(#eeeef2,#e0e0e6);border-bottom:1px solid #d0d0d6"></div><div class="t" style="left:241.5px;width:300px;text-align:center;top:386.15px;font-size:7.5px;line-height:7.5px;color:#262626;font-weight:400;transform:scaleX(0.93)">Group</div><div style="position:absolute;left:414.5px;top:385.2px;width:74.5px;height:9.0px;box-sizing:border-box;background:transparent;border:1px solid rgba(0,0,0,0.045);border-radius:2px"></div><svg style="position:absolute;left:493px;top:386.2px;overflow:visible" width="4.5" height="7.5" viewBox="0 0 4.5 7.5"><path d="M3.8 0.6 L0.9 3.75 L3.8 6.9" fill="none" stroke="#1a1a1a" stroke-width="1.3"/></svg><div style="position:absolute;left:501px;top:385.2px;width:6.5px;height:9.5px;background:linear-gradient(#f4f4f4,#dcdcdc)"></div><div class="t" style="left:354.3px;width:300px;text-align:center;top:387.11px;font-size:6.6px;line-height:6.6px;color:#333;font-weight:700;">M</div><div style="position:absolute;left:510.7px;top:385.2px;width:75.80000000000001px;height:9.0px;box-sizing:border-box;background:transparent;border:1px solid rgba(0,0,0,0.045);border-radius:2px"></div><svg style="position:absolute;left:589.4px;top:386.0px;overflow:visible" width="4.5" height="7.5" viewBox="0 0 4.5 7.5"><path d="M3.8 0.6 L0.9 3.75 L3.8 6.9" fill="none" stroke="#1a1a1a" stroke-width="1.3"/></svg><svg style="position:absolute;left:642.8px;top:386.0px;overflow:visible" width="4.5" height="7.5" viewBox="0 0 4.5 7.5"><path d="M3.8 0.6 L0.9 3.75 L3.8 6.9" fill="none" stroke="#1a1a1a" stroke-width="1.3"/></svg><div style="position:absolute;left:650.5px;top:384.09999999999997px;width:40.5px;height:10.800000000000011px;box-sizing:border-box;background:linear-gradient(#eeeef2,#e0e0e6);border-bottom:1px solid #d0d0d6"></div><div class="t" style="left:520.75px;width:300px;text-align:center;top:386.45px;font-size:7.5px;line-height:7.5px;color:#262626;font-weight:400;transform:scaleX(0.93)">Agent</div><div style="position:absolute;left:694.5px;top:373.0px;width:79.29999999999995px;height:8.599999999999966px;box-sizing:border-box;background:transparent;border:1px solid rgba(0,0,0,0.045);border-radius:2px"></div><div class="t" style="left:584.2px;width:300px;text-align:center;top:374.78px;font-size:7.7px;line-height:7.7px;color:#2a2a2a;font-weight:400;transform:scaleX(0.93)">GENERAL</div><div style="position:absolute;left:694.5px;top:385.59999999999997px;width:79.29999999999995px;height:7.7000000000000455px;box-sizing:border-box;background:transparent;border:1px solid rgba(0,0,0,0.045);border-radius:2px"></div><svg style="position:absolute;left:780.2px;top:373.59999999999997px;overflow:visible" width="4.5" height="7.5" viewBox="0 0 4.5 7.5"><path d="M3.8 0.6 L0.9 3.75 L3.8 6.9" fill="none" stroke="#1a1a1a" stroke-width="1.3"/></svg><svg style="position:absolute;left:780.2px;top:385.8px;overflow:visible" width="4.5" height="7.5" viewBox="0 0 4.5 7.5"><path d="M3.8 0.6 L0.9 3.75 L3.8 6.9" fill="none" stroke="#1a1a1a" stroke-width="1.3"/></svg><div style="position:absolute;left:787.5px;top:377.59999999999997px;width:16.2px;height:10.2px;box-sizing:border-box;border:1px solid #7a7a7a;border-radius:2px;background:#fff"></div><div class="t" style="left:645.4px;width:300px;text-align:center;top:380.04px;font-size:6.1px;line-height:6.1px;color:#1a1a1a;font-weight:400;transform:scaleX(0.9);-webkit-text-stroke:0.15px #1a1a1a">Omit</div><div style="position:absolute;left:808px;top:378.8px;width:7.2px;height:7.3px;box-sizing:border-box;border:1px solid #2a2a2a;background:#fff"></div><svg style="position:absolute;left:822px;top:379.0px;overflow:visible" width="6.5" height="7.5" viewBox="0 0 6.5 7.5"><rect x="2" y="0" width="2.5" height="1" fill="#707070"/><rect x="0" y="1" width="6.5" height="1.2" fill="#707070"/><path d="M0.6 2.5 H5.9 L5.4 7.5 H1.1 Z" fill="#8a8a8a"/><rect x="2" y="3.2" width="0.7" height="3.5" fill="#e8e8e8"/><rect x="3.8" y="3.2" width="0.7" height="3.5" fill="#e8e8e8"/></svg><svg style="position:absolute;left:104px;top:401.10px" width="716" height="2.2"><line x1="0" y1="1.1" x2="716" y2="1.1" stroke="#111" stroke-width="1.65" stroke-dasharray="3.7 3.3"/></svg><div style="position:absolute;left:105.5px;top:406.9px;width:124.80000000000001px;height:11px;box-sizing:border-box;background:transparent;border-bottom:1.5px solid #9c9c9c;border-radius:0 0 3px 3px"></div><svg style="position:absolute;left:233.5px;top:408.5px;overflow:visible" width="7" height="8" viewBox="0 0 7 8"><path d="M0.8 1.4 Q0.8 0.4 1.8 0.4 L5.2 0.4 Q6.2 0.4 6.2 1.4 L6.2 4.2 Q6.2 5.4 5 5.4 L2 5.4 Q0.8 5.4 0.8 4.2 Z" fill="#f2c46a" stroke="#7a5224" stroke-width="0.8"/><rect x="2.2" y="1.8" width="2.4" height="2.2" fill="#fde7b4"/><path d="M3.2 5.4 L4.6 5.4 L4.1 7.6 Z" fill="#4a4a4a"/></svg><div style="position:absolute;left:243.3px;top:406.9px;width:69.5px;height:11px;box-sizing:border-box;background:transparent;border-bottom:1.5px solid #9c9c9c;border-radius:0 0 3px 3px"></div><svg style="position:absolute;left:317px;top:408.2px;overflow:visible" width="8" height="8" viewBox="0 0 8 8"><path d="M1.3 0.8 Q0.2 2 1.2 4.2 Q2.8 7 5.2 7.6 Q6.3 7.8 7 7 L5.6 5.4 L4.7 5.9 Q3.2 5.2 2.5 3.4 L3.2 2.6 Z" fill="#e60048"/><path d="M4.2 0.6 Q7 1 7.4 3.8" fill="none" stroke="#f07098" stroke-width="0.9"/><path d="M4.2 2.2 Q5.8 2.5 6 4" fill="none" stroke="#f07098" stroke-width="0.9"/></svg><div style="position:absolute;left:327.8px;top:409.09999999999997px;width:40.19999999999999px;height:9px;box-sizing:border-box;background:transparent;border-bottom:1.5px solid #9c9c9c;border-radius:0 0 3px 3px"></div><div style="position:absolute;left:419.7px;top:406.9px;width:71.10000000000002px;height:11px;box-sizing:border-box;background:transparent;border-bottom:1.5px solid #9c9c9c;border-radius:0 0 3px 3px"></div><svg style="position:absolute;left:494.2px;top:408.2px;overflow:visible" width="8" height="8" viewBox="0 0 8 8"><path d="M1.3 0.8 Q0.2 2 1.2 4.2 Q2.8 7 5.2 7.6 Q6.3 7.8 7 7 L5.6 5.4 L4.7 5.9 Q3.2 5.2 2.5 3.4 L3.2 2.6 Z" fill="#e60048"/><path d="M4.2 0.6 Q7 1 7.4 3.8" fill="none" stroke="#f07098" stroke-width="0.9"/><path d="M4.2 2.2 Q5.8 2.5 6 4" fill="none" stroke="#f07098" stroke-width="0.9"/></svg><div class="t" style="left:105.6px;top:423.04px;font-size:7.4px;line-height:7.4px;color:#151515;font-weight:400;transform:scaleX(0.96);transform-origin:0 50%;-webkit-text-stroke:0.12px #151515">Notes:</div><div style="position:absolute;left:130.7px;top:421.9px;width:227.7px;height:9px;box-sizing:border-box;background:transparent;border-bottom:1.5px solid #9c9c9c;border-radius:0 0 3px 3px"></div><svg style="position:absolute;left:359.8px;top:422.1px;overflow:visible" width="8.5" height="8" viewBox="0 0 8.5 8"><circle cx="1.7" cy="1.6" r="0.85" fill="#7ab8f0"/><circle cx="4.5" cy="1.6" r="0.85" fill="#7ac4f0"/><circle cx="1.7" cy="4.4" r="0.85" fill="#7ab8f0"/><circle cx="4.5" cy="4.4" r="0.85" fill="#60c8e8"/><line x1="5.8" y1="5.8" x2="7.8" y2="7.6" stroke="#3c94e4" stroke-width="1.6" stroke-linecap="round"/></svg><div style="position:absolute;left:371px;top:420.8px;width:41px;height:9.599999999999966px;box-sizing:border-box;background:linear-gradient(#eeeef2,#e0e0e6);border-bottom:1px solid #d0d0d6"></div><div class="t" style="left:241.5px;width:300px;text-align:center;top:421.95px;font-size:7.5px;line-height:7.5px;color:#262626;font-weight:400;transform:scaleX(0.93)">Group</div><div style="position:absolute;left:414.5px;top:421.0px;width:74.5px;height:9.0px;box-sizing:border-box;background:transparent;border:1px solid rgba(0,0,0,0.045);border-radius:2px"></div><svg style="position:absolute;left:493px;top:422.0px;overflow:visible" width="4.5" height="7.5" viewBox="0 0 4.5 7.5"><path d="M3.8 0.6 L0.9 3.75 L3.8 6.9" fill="none" stroke="#1a1a1a" stroke-width="1.3"/></svg><div style="position:absolute;left:501px;top:421.0px;width:6.5px;height:9.5px;background:linear-gradient(#f4f4f4,#dcdcdc)"></div><div class="t" style="left:354.3px;width:300px;text-align:center;top:422.91px;font-size:6.6px;line-height:6.6px;color:#333;font-weight:700;">M</div><div style="position:absolute;left:510.7px;top:421.0px;width:75.80000000000001px;height:9.0px;box-sizing:border-box;background:transparent;border:1px solid rgba(0,0,0,0.045);border-radius:2px"></div><svg style="position:absolute;left:589.4px;top:421.8px;overflow:visible" width="4.5" height="7.5" viewBox="0 0 4.5 7.5"><path d="M3.8 0.6 L0.9 3.75 L3.8 6.9" fill="none" stroke="#1a1a1a" stroke-width="1.3"/></svg><svg style="position:absolute;left:642.8px;top:421.8px;overflow:visible" width="4.5" height="7.5" viewBox="0 0 4.5 7.5"><path d="M3.8 0.6 L0.9 3.75 L3.8 6.9" fill="none" stroke="#1a1a1a" stroke-width="1.3"/></svg><div style="position:absolute;left:650.5px;top:419.9px;width:40.5px;height:10.800000000000011px;box-sizing:border-box;background:linear-gradient(#eeeef2,#e0e0e6);border-bottom:1px solid #d0d0d6"></div><div class="t" style="left:520.75px;width:300px;text-align:center;top:422.25px;font-size:7.5px;line-height:7.5px;color:#262626;font-weight:400;transform:scaleX(0.93)">Agent</div><div style="position:absolute;left:694.5px;top:408.8px;width:79.29999999999995px;height:8.599999999999966px;box-sizing:border-box;background:transparent;border:1px solid rgba(0,0,0,0.045);border-radius:2px"></div><div class="t" style="left:584.2px;width:300px;text-align:center;top:410.58px;font-size:7.7px;line-height:7.7px;color:#2a2a2a;font-weight:400;transform:scaleX(0.93)">GENERAL</div><div style="position:absolute;left:694.5px;top:421.4px;width:79.29999999999995px;height:7.7000000000000455px;box-sizing:border-box;background:transparent;border:1px solid rgba(0,0,0,0.045);border-radius:2px"></div><svg style="position:absolute;left:780.2px;top:409.4px;overflow:visible" width="4.5" height="7.5" viewBox="0 0 4.5 7.5"><path d="M3.8 0.6 L0.9 3.75 L3.8 6.9" fill="none" stroke="#1a1a1a" stroke-width="1.3"/></svg><svg style="position:absolute;left:780.2px;top:421.6px;overflow:visible" width="4.5" height="7.5" viewBox="0 0 4.5 7.5"><path d="M3.8 0.6 L0.9 3.75 L3.8 6.9" fill="none" stroke="#1a1a1a" stroke-width="1.3"/></svg><div style="position:absolute;left:787.5px;top:413.4px;width:16.2px;height:10.2px;box-sizing:border-box;border:1px solid #7a7a7a;border-radius:2px;background:#fff"></div><div class="t" style="left:645.4px;width:300px;text-align:center;top:415.84px;font-size:6.1px;line-height:6.1px;color:#1a1a1a;font-weight:400;transform:scaleX(0.9);-webkit-text-stroke:0.15px #1a1a1a">Omit</div><div style="position:absolute;left:808px;top:414.6px;width:7.2px;height:7.3px;box-sizing:border-box;border:1px solid #2a2a2a;background:#fff"></div><svg style="position:absolute;left:822px;top:414.8px;overflow:visible" width="6.5" height="7.5" viewBox="0 0 6.5 7.5"><rect x="2" y="0" width="2.5" height="1" fill="#707070"/><rect x="0" y="1" width="6.5" height="1.2" fill="#707070"/><path d="M0.6 2.5 H5.9 L5.4 7.5 H1.1 Z" fill="#8a8a8a"/><rect x="2" y="3.2" width="0.7" height="3.5" fill="#e8e8e8"/><rect x="3.8" y="3.2" width="0.7" height="3.5" fill="#e8e8e8"/></svg><svg style="position:absolute;left:104px;top:436.90px" width="716" height="2.2"><line x1="0" y1="1.1" x2="716" y2="1.1" stroke="#111" stroke-width="1.65" stroke-dasharray="3.7 3.3"/></svg><div style="position:absolute;left:104.5px;top:438.99999999999994px;width:731px;height:34.8px;background:#f2f2f2"></div><div style="position:absolute;left:105.5px;top:442.69999999999993px;width:124.80000000000001px;height:11px;box-sizing:border-box;background:transparent;border-bottom:1.5px solid #9c9c9c;border-radius:0 0 3px 3px"></div><svg style="position:absolute;left:233.5px;top:444.29999999999995px;overflow:visible" width="7" height="8" viewBox="0 0 7 8"><path d="M0.8 1.4 Q0.8 0.4 1.8 0.4 L5.2 0.4 Q6.2 0.4 6.2 1.4 L6.2 4.2 Q6.2 5.4 5 5.4 L2 5.4 Q0.8 5.4 0.8 4.2 Z" fill="#f2c46a" stroke="#7a5224" stroke-width="0.8"/><rect x="2.2" y="1.8" width="2.4" height="2.2" fill="#fde7b4"/><path d="M3.2 5.4 L4.6 5.4 L4.1 7.6 Z" fill="#4a4a4a"/></svg><div style="position:absolute;left:243.3px;top:442.69999999999993px;width:69.5px;height:11px;box-sizing:border-box;background:#e6eefa;border-bottom:1.5px solid #9c9c9c;border-radius:0 0 3px 3px"></div><svg style="position:absolute;left:317px;top:443.99999999999994px;overflow:visible" width="8" height="8" viewBox="0 0 8 8"><path d="M1.3 0.8 Q0.2 2 1.2 4.2 Q2.8 7 5.2 7.6 Q6.3 7.8 7 7 L5.6 5.4 L4.7 5.9 Q3.2 5.2 2.5 3.4 L3.2 2.6 Z" fill="#e60048"/><path d="M4.2 0.6 Q7 1 7.4 3.8" fill="none" stroke="#f07098" stroke-width="0.9"/><path d="M4.2 2.2 Q5.8 2.5 6 4" fill="none" stroke="#f07098" stroke-width="0.9"/></svg><div style="position:absolute;left:327.8px;top:444.8999999999999px;width:40.19999999999999px;height:9px;box-sizing:border-box;background:transparent;border-bottom:1.5px solid #9c9c9c;border-radius:0 0 3px 3px"></div><div style="position:absolute;left:419.7px;top:442.69999999999993px;width:71.10000000000002px;height:11px;box-sizing:border-box;background:#e6eefa;border-bottom:1.5px solid #9c9c9c;border-radius:0 0 3px 3px"></div><svg style="position:absolute;left:494.2px;top:443.99999999999994px;overflow:visible" width="8" height="8" viewBox="0 0 8 8"><path d="M1.3 0.8 Q0.2 2 1.2 4.2 Q2.8 7 5.2 7.6 Q6.3 7.8 7 7 L5.6 5.4 L4.7 5.9 Q3.2 5.2 2.5 3.4 L3.2 2.6 Z" fill="#e60048"/><path d="M4.2 0.6 Q7 1 7.4 3.8" fill="none" stroke="#f07098" stroke-width="0.9"/><path d="M4.2 2.2 Q5.8 2.5 6 4" fill="none" stroke="#f07098" stroke-width="0.9"/></svg><div class="t" style="left:105.6px;top:458.84px;font-size:7.4px;line-height:7.4px;color:#151515;font-weight:400;transform:scaleX(0.96);transform-origin:0 50%;-webkit-text-stroke:0.12px #151515">Notes:</div><div style="position:absolute;left:130.7px;top:457.69999999999993px;width:227.7px;height:9px;box-sizing:border-box;background:transparent;border-bottom:1.5px solid #9c9c9c;border-radius:0 0 3px 3px"></div><svg style="position:absolute;left:359.8px;top:457.9px;overflow:visible" width="8.5" height="8" viewBox="0 0 8.5 8"><circle cx="1.7" cy="1.6" r="0.85" fill="#7ab8f0"/><circle cx="4.5" cy="1.6" r="0.85" fill="#7ac4f0"/><circle cx="1.7" cy="4.4" r="0.85" fill="#7ab8f0"/><circle cx="4.5" cy="4.4" r="0.85" fill="#60c8e8"/><line x1="5.8" y1="5.8" x2="7.8" y2="7.6" stroke="#3c94e4" stroke-width="1.6" stroke-linecap="round"/></svg><div style="position:absolute;left:371px;top:456.59999999999997px;width:41px;height:9.599999999999966px;box-sizing:border-box;background:linear-gradient(#eeeef2,#e0e0e6);border-bottom:1px solid #d0d0d6"></div><div class="t" style="left:241.5px;width:300px;text-align:center;top:457.75px;font-size:7.5px;line-height:7.5px;color:#262626;font-weight:400;transform:scaleX(0.93)">Group</div><div style="position:absolute;left:414.5px;top:456.79999999999995px;width:74.5px;height:9.0px;box-sizing:border-box;background:transparent;border:1px solid rgba(0,0,0,0.045);border-radius:2px"></div><svg style="position:absolute;left:493px;top:457.79999999999995px;overflow:visible" width="4.5" height="7.5" viewBox="0 0 4.5 7.5"><path d="M3.8 0.6 L0.9 3.75 L3.8 6.9" fill="none" stroke="#1a1a1a" stroke-width="1.3"/></svg><div style="position:absolute;left:501px;top:456.79999999999995px;width:6.5px;height:9.5px;background:linear-gradient(#f4f4f4,#dcdcdc)"></div><div class="t" style="left:354.3px;width:300px;text-align:center;top:458.71px;font-size:6.6px;line-height:6.6px;color:#333;font-weight:700;">M</div><div style="position:absolute;left:510.7px;top:456.79999999999995px;width:75.80000000000001px;height:9.0px;box-sizing:border-box;background:transparent;border:1px solid rgba(0,0,0,0.045);border-radius:2px"></div><svg style="position:absolute;left:589.4px;top:457.59999999999997px;overflow:visible" width="4.5" height="7.5" viewBox="0 0 4.5 7.5"><path d="M3.8 0.6 L0.9 3.75 L3.8 6.9" fill="none" stroke="#1a1a1a" stroke-width="1.3"/></svg><svg style="position:absolute;left:642.8px;top:457.59999999999997px;overflow:visible" width="4.5" height="7.5" viewBox="0 0 4.5 7.5"><path d="M3.8 0.6 L0.9 3.75 L3.8 6.9" fill="none" stroke="#1a1a1a" stroke-width="1.3"/></svg><div style="position:absolute;left:650.5px;top:455.69999999999993px;width:40.5px;height:10.800000000000011px;box-sizing:border-box;background:linear-gradient(#eeeef2,#e0e0e6);border-bottom:1px solid #d0d0d6"></div><div class="t" style="left:520.75px;width:300px;text-align:center;top:458.05px;font-size:7.5px;line-height:7.5px;color:#262626;font-weight:400;transform:scaleX(0.93)">Agent</div><div style="position:absolute;left:694.5px;top:444.59999999999997px;width:79.29999999999995px;height:8.599999999999966px;box-sizing:border-box;background:transparent;border:1px solid rgba(0,0,0,0.045);border-radius:2px"></div><div class="t" style="left:584.2px;width:300px;text-align:center;top:446.38px;font-size:7.7px;line-height:7.7px;color:#2a2a2a;font-weight:400;transform:scaleX(0.93)">GENERAL</div><div style="position:absolute;left:694.5px;top:457.19999999999993px;width:79.29999999999995px;height:7.7000000000000455px;box-sizing:border-box;background:transparent;border:1px solid rgba(0,0,0,0.045);border-radius:2px"></div><svg style="position:absolute;left:780.2px;top:445.19999999999993px;overflow:visible" width="4.5" height="7.5" viewBox="0 0 4.5 7.5"><path d="M3.8 0.6 L0.9 3.75 L3.8 6.9" fill="none" stroke="#1a1a1a" stroke-width="1.3"/></svg><svg style="position:absolute;left:780.2px;top:457.4px;overflow:visible" width="4.5" height="7.5" viewBox="0 0 4.5 7.5"><path d="M3.8 0.6 L0.9 3.75 L3.8 6.9" fill="none" stroke="#1a1a1a" stroke-width="1.3"/></svg><div style="position:absolute;left:787.5px;top:449.19999999999993px;width:16.2px;height:10.2px;box-sizing:border-box;border:1px solid #7a7a7a;border-radius:2px;background:#fff"></div><div class="t" style="left:645.4px;width:300px;text-align:center;top:451.64px;font-size:6.1px;line-height:6.1px;color:#1a1a1a;font-weight:400;transform:scaleX(0.9);-webkit-text-stroke:0.15px #1a1a1a">Omit</div><div style="position:absolute;left:808px;top:450.4px;width:7.2px;height:7.3px;box-sizing:border-box;border:1px solid #2a2a2a;background:#fff"></div><svg style="position:absolute;left:822px;top:450.59999999999997px;overflow:visible" width="6.5" height="7.5" viewBox="0 0 6.5 7.5"><rect x="2" y="0" width="2.5" height="1" fill="#707070"/><rect x="0" y="1" width="6.5" height="1.2" fill="#707070"/><path d="M0.6 2.5 H5.9 L5.4 7.5 H1.1 Z" fill="#8a8a8a"/><rect x="2" y="3.2" width="0.7" height="3.5" fill="#e8e8e8"/><rect x="3.8" y="3.2" width="0.7" height="3.5" fill="#e8e8e8"/></svg><svg style="position:absolute;left:104px;top:472.70px" width="716" height="2.2"><line x1="0" y1="1.1" x2="716" y2="1.1" stroke="#111" stroke-width="1.65" stroke-dasharray="3.7 3.3"/></svg><div style="position:absolute;left:105.5px;top:478.49999999999994px;width:124.80000000000001px;height:11px;box-sizing:border-box;background:transparent;border-bottom:1.5px solid #9c9c9c;border-radius:0 0 3px 3px"></div><svg style="position:absolute;left:233.5px;top:480.09999999999997px;overflow:visible" width="7" height="8" viewBox="0 0 7 8"><path d="M0.8 1.4 Q0.8 0.4 1.8 0.4 L5.2 0.4 Q6.2 0.4 6.2 1.4 L6.2 4.2 Q6.2 5.4 5 5.4 L2 5.4 Q0.8 5.4 0.8 4.2 Z" fill="#f2c46a" stroke="#7a5224" stroke-width="0.8"/><rect x="2.2" y="1.8" width="2.4" height="2.2" fill="#fde7b4"/><path d="M3.2 5.4 L4.6 5.4 L4.1 7.6 Z" fill="#4a4a4a"/></svg><div style="position:absolute;left:243.3px;top:478.49999999999994px;width:69.5px;height:11px;box-sizing:border-box;background:transparent;border-bottom:1.5px solid #9c9c9c;border-radius:0 0 3px 3px"></div><svg style="position:absolute;left:317px;top:479.79999999999995px;overflow:visible" width="8" height="8" viewBox="0 0 8 8"><path d="M1.3 0.8 Q0.2 2 1.2 4.2 Q2.8 7 5.2 7.6 Q6.3 7.8 7 7 L5.6 5.4 L4.7 5.9 Q3.2 5.2 2.5 3.4 L3.2 2.6 Z" fill="#e60048"/><path d="M4.2 0.6 Q7 1 7.4 3.8" fill="none" stroke="#f07098" stroke-width="0.9"/><path d="M4.2 2.2 Q5.8 2.5 6 4" fill="none" stroke="#f07098" stroke-width="0.9"/></svg><div style="position:absolute;left:327.8px;top:480.69999999999993px;width:40.19999999999999px;height:9px;box-sizing:border-box;background:transparent;border-bottom:1.5px solid #9c9c9c;border-radius:0 0 3px 3px"></div><div style="position:absolute;left:419.7px;top:478.49999999999994px;width:71.10000000000002px;height:11px;box-sizing:border-box;background:transparent;border-bottom:1.5px solid #9c9c9c;border-radius:0 0 3px 3px"></div><svg style="position:absolute;left:494.2px;top:479.79999999999995px;overflow:visible" width="8" height="8" viewBox="0 0 8 8"><path d="M1.3 0.8 Q0.2 2 1.2 4.2 Q2.8 7 5.2 7.6 Q6.3 7.8 7 7 L5.6 5.4 L4.7 5.9 Q3.2 5.2 2.5 3.4 L3.2 2.6 Z" fill="#e60048"/><path d="M4.2 0.6 Q7 1 7.4 3.8" fill="none" stroke="#f07098" stroke-width="0.9"/><path d="M4.2 2.2 Q5.8 2.5 6 4" fill="none" stroke="#f07098" stroke-width="0.9"/></svg><div class="t" style="left:105.6px;top:494.64px;font-size:7.4px;line-height:7.4px;color:#151515;font-weight:400;transform:scaleX(0.96);transform-origin:0 50%;-webkit-text-stroke:0.12px #151515">Notes:</div><div style="position:absolute;left:130.7px;top:493.49999999999994px;width:227.7px;height:9px;box-sizing:border-box;background:transparent;border-bottom:1.5px solid #9c9c9c;border-radius:0 0 3px 3px"></div><svg style="position:absolute;left:359.8px;top:493.7px;overflow:visible" width="8.5" height="8" viewBox="0 0 8.5 8"><circle cx="1.7" cy="1.6" r="0.85" fill="#7ab8f0"/><circle cx="4.5" cy="1.6" r="0.85" fill="#7ac4f0"/><circle cx="1.7" cy="4.4" r="0.85" fill="#7ab8f0"/><circle cx="4.5" cy="4.4" r="0.85" fill="#60c8e8"/><line x1="5.8" y1="5.8" x2="7.8" y2="7.6" stroke="#3c94e4" stroke-width="1.6" stroke-linecap="round"/></svg><div style="position:absolute;left:371px;top:492.4px;width:41px;height:9.599999999999966px;box-sizing:border-box;background:linear-gradient(#eeeef2,#e0e0e6);border-bottom:1px solid #d0d0d6"></div><div class="t" style="left:241.5px;width:300px;text-align:center;top:493.55px;font-size:7.5px;line-height:7.5px;color:#262626;font-weight:400;transform:scaleX(0.93)">Group</div><div style="position:absolute;left:414.5px;top:492.59999999999997px;width:74.5px;height:9.0px;box-sizing:border-box;background:transparent;border:1px solid rgba(0,0,0,0.045);border-radius:2px"></div><svg style="position:absolute;left:493px;top:493.59999999999997px;overflow:visible" width="4.5" height="7.5" viewBox="0 0 4.5 7.5"><path d="M3.8 0.6 L0.9 3.75 L3.8 6.9" fill="none" stroke="#1a1a1a" stroke-width="1.3"/></svg><div style="position:absolute;left:501px;top:492.59999999999997px;width:6.5px;height:9.5px;background:linear-gradient(#f4f4f4,#dcdcdc)"></div><div class="t" style="left:354.3px;width:300px;text-align:center;top:494.51px;font-size:6.6px;line-height:6.6px;color:#333;font-weight:700;">M</div><div style="position:absolute;left:510.7px;top:492.59999999999997px;width:75.80000000000001px;height:9.0px;box-sizing:border-box;background:transparent;border:1px solid rgba(0,0,0,0.045);border-radius:2px"></div><svg style="position:absolute;left:589.4px;top:493.4px;overflow:visible" width="4.5" height="7.5" viewBox="0 0 4.5 7.5"><path d="M3.8 0.6 L0.9 3.75 L3.8 6.9" fill="none" stroke="#1a1a1a" stroke-width="1.3"/></svg><svg style="position:absolute;left:642.8px;top:493.4px;overflow:visible" width="4.5" height="7.5" viewBox="0 0 4.5 7.5"><path d="M3.8 0.6 L0.9 3.75 L3.8 6.9" fill="none" stroke="#1a1a1a" stroke-width="1.3"/></svg><div style="position:absolute;left:650.5px;top:491.49999999999994px;width:40.5px;height:10.800000000000011px;box-sizing:border-box;background:linear-gradient(#eeeef2,#e0e0e6);border-bottom:1px solid #d0d0d6"></div><div class="t" style="left:520.75px;width:300px;text-align:center;top:493.85px;font-size:7.5px;line-height:7.5px;color:#262626;font-weight:400;transform:scaleX(0.93)">Agent</div><div style="position:absolute;left:694.5px;top:480.4px;width:79.29999999999995px;height:8.599999999999966px;box-sizing:border-box;background:transparent;border:1px solid rgba(0,0,0,0.045);border-radius:2px"></div><div class="t" style="left:584.2px;width:300px;text-align:center;top:482.18px;font-size:7.7px;line-height:7.7px;color:#2a2a2a;font-weight:400;transform:scaleX(0.93)">GENERAL</div><div style="position:absolute;left:694.5px;top:492.99999999999994px;width:79.29999999999995px;height:7.7000000000000455px;box-sizing:border-box;background:transparent;border:1px solid rgba(0,0,0,0.045);border-radius:2px"></div><svg style="position:absolute;left:780.2px;top:480.99999999999994px;overflow:visible" width="4.5" height="7.5" viewBox="0 0 4.5 7.5"><path d="M3.8 0.6 L0.9 3.75 L3.8 6.9" fill="none" stroke="#1a1a1a" stroke-width="1.3"/></svg><svg style="position:absolute;left:780.2px;top:493.2px;overflow:visible" width="4.5" height="7.5" viewBox="0 0 4.5 7.5"><path d="M3.8 0.6 L0.9 3.75 L3.8 6.9" fill="none" stroke="#1a1a1a" stroke-width="1.3"/></svg><div style="position:absolute;left:787.5px;top:484.99999999999994px;width:16.2px;height:10.2px;box-sizing:border-box;border:1px solid #7a7a7a;border-radius:2px;background:#fff"></div><div class="t" style="left:645.4px;width:300px;text-align:center;top:487.44px;font-size:6.1px;line-height:6.1px;color:#1a1a1a;font-weight:400;transform:scaleX(0.9);-webkit-text-stroke:0.15px #1a1a1a">Omit</div><div style="position:absolute;left:808px;top:486.2px;width:7.2px;height:7.3px;box-sizing:border-box;border:1px solid #2a2a2a;background:#fff"></div><svg style="position:absolute;left:822px;top:486.4px;overflow:visible" width="6.5" height="7.5" viewBox="0 0 6.5 7.5"><rect x="2" y="0" width="2.5" height="1" fill="#707070"/><rect x="0" y="1" width="6.5" height="1.2" fill="#707070"/><path d="M0.6 2.5 H5.9 L5.4 7.5 H1.1 Z" fill="#8a8a8a"/><rect x="2" y="3.2" width="0.7" height="3.5" fill="#e8e8e8"/><rect x="3.8" y="3.2" width="0.7" height="3.5" fill="#e8e8e8"/></svg><svg style="position:absolute;left:104px;top:508.50px" width="716" height="2.2"><line x1="0" y1="1.1" x2="716" y2="1.1" stroke="#111" stroke-width="1.65" stroke-dasharray="3.7 3.3"/></svg><div style="position:absolute;left:104.5px;top:510.59999999999997px;width:731px;height:34.8px;background:#f2f2f2"></div><div style="position:absolute;left:105.5px;top:514.3000000000001px;width:124.80000000000001px;height:11px;box-sizing:border-box;background:transparent;border-bottom:1.5px solid #9c9c9c;border-radius:0 0 3px 3px"></div><svg style="position:absolute;left:233.5px;top:515.9px;overflow:visible" width="7" height="8" viewBox="0 0 7 8"><path d="M0.8 1.4 Q0.8 0.4 1.8 0.4 L5.2 0.4 Q6.2 0.4 6.2 1.4 L6.2 4.2 Q6.2 5.4 5 5.4 L2 5.4 Q0.8 5.4 0.8 4.2 Z" fill="#f2c46a" stroke="#7a5224" stroke-width="0.8"/><rect x="2.2" y="1.8" width="2.4" height="2.2" fill="#fde7b4"/><path d="M3.2 5.4 L4.6 5.4 L4.1 7.6 Z" fill="#4a4a4a"/></svg><div style="position:absolute;left:243.3px;top:514.3000000000001px;width:69.5px;height:11px;box-sizing:border-box;background:#e6eefa;border-bottom:1.5px solid #9c9c9c;border-radius:0 0 3px 3px"></div><svg style="position:absolute;left:317px;top:515.6px;overflow:visible" width="8" height="8" viewBox="0 0 8 8"><path d="M1.3 0.8 Q0.2 2 1.2 4.2 Q2.8 7 5.2 7.6 Q6.3 7.8 7 7 L5.6 5.4 L4.7 5.9 Q3.2 5.2 2.5 3.4 L3.2 2.6 Z" fill="#e60048"/><path d="M4.2 0.6 Q7 1 7.4 3.8" fill="none" stroke="#f07098" stroke-width="0.9"/><path d="M4.2 2.2 Q5.8 2.5 6 4" fill="none" stroke="#f07098" stroke-width="0.9"/></svg><div style="position:absolute;left:327.8px;top:516.5px;width:40.19999999999999px;height:9px;box-sizing:border-box;background:transparent;border-bottom:1.5px solid #9c9c9c;border-radius:0 0 3px 3px"></div><div style="position:absolute;left:419.7px;top:514.3000000000001px;width:71.10000000000002px;height:11px;box-sizing:border-box;background:#e6eefa;border-bottom:1.5px solid #9c9c9c;border-radius:0 0 3px 3px"></div><svg style="position:absolute;left:494.2px;top:515.6px;overflow:visible" width="8" height="8" viewBox="0 0 8 8"><path d="M1.3 0.8 Q0.2 2 1.2 4.2 Q2.8 7 5.2 7.6 Q6.3 7.8 7 7 L5.6 5.4 L4.7 5.9 Q3.2 5.2 2.5 3.4 L3.2 2.6 Z" fill="#e60048"/><path d="M4.2 0.6 Q7 1 7.4 3.8" fill="none" stroke="#f07098" stroke-width="0.9"/><path d="M4.2 2.2 Q5.8 2.5 6 4" fill="none" stroke="#f07098" stroke-width="0.9"/></svg><div class="t" style="left:105.6px;top:530.44px;font-size:7.4px;line-height:7.4px;color:#151515;font-weight:400;transform:scaleX(0.96);transform-origin:0 50%;-webkit-text-stroke:0.12px #151515">Notes:</div><div style="position:absolute;left:130.7px;top:529.3000000000001px;width:227.7px;height:9px;box-sizing:border-box;background:transparent;border-bottom:1.5px solid #9c9c9c;border-radius:0 0 3px 3px"></div><svg style="position:absolute;left:359.8px;top:529.5px;overflow:visible" width="8.5" height="8" viewBox="0 0 8.5 8"><circle cx="1.7" cy="1.6" r="0.85" fill="#7ab8f0"/><circle cx="4.5" cy="1.6" r="0.85" fill="#7ac4f0"/><circle cx="1.7" cy="4.4" r="0.85" fill="#7ab8f0"/><circle cx="4.5" cy="4.4" r="0.85" fill="#60c8e8"/><line x1="5.8" y1="5.8" x2="7.8" y2="7.6" stroke="#3c94e4" stroke-width="1.6" stroke-linecap="round"/></svg><div style="position:absolute;left:371px;top:528.1999999999999px;width:41px;height:9.600000000000023px;box-sizing:border-box;background:linear-gradient(#eeeef2,#e0e0e6);border-bottom:1px solid #d0d0d6"></div><div class="t" style="left:241.5px;width:300px;text-align:center;top:529.35px;font-size:7.5px;line-height:7.5px;color:#262626;font-weight:400;transform:scaleX(0.93)">Group</div><div style="position:absolute;left:414.5px;top:528.4px;width:74.5px;height:9.0px;box-sizing:border-box;background:transparent;border:1px solid rgba(0,0,0,0.045);border-radius:2px"></div><svg style="position:absolute;left:493px;top:529.4px;overflow:visible" width="4.5" height="7.5" viewBox="0 0 4.5 7.5"><path d="M3.8 0.6 L0.9 3.75 L3.8 6.9" fill="none" stroke="#1a1a1a" stroke-width="1.3"/></svg><div style="position:absolute;left:501px;top:528.4px;width:6.5px;height:9.5px;background:linear-gradient(#f4f4f4,#dcdcdc)"></div><div class="t" style="left:354.3px;width:300px;text-align:center;top:530.31px;font-size:6.6px;line-height:6.6px;color:#333;font-weight:700;">M</div><div style="position:absolute;left:510.7px;top:528.4px;width:75.80000000000001px;height:9.0px;box-sizing:border-box;background:transparent;border:1px solid rgba(0,0,0,0.045);border-radius:2px"></div><svg style="position:absolute;left:589.4px;top:529.1999999999999px;overflow:visible" width="4.5" height="7.5" viewBox="0 0 4.5 7.5"><path d="M3.8 0.6 L0.9 3.75 L3.8 6.9" fill="none" stroke="#1a1a1a" stroke-width="1.3"/></svg><svg style="position:absolute;left:642.8px;top:529.1999999999999px;overflow:visible" width="4.5" height="7.5" viewBox="0 0 4.5 7.5"><path d="M3.8 0.6 L0.9 3.75 L3.8 6.9" fill="none" stroke="#1a1a1a" stroke-width="1.3"/></svg><div style="position:absolute;left:650.5px;top:527.3px;width:40.5px;height:10.800000000000068px;box-sizing:border-box;background:linear-gradient(#eeeef2,#e0e0e6);border-bottom:1px solid #d0d0d6"></div><div class="t" style="left:520.75px;width:300px;text-align:center;top:529.65px;font-size:7.5px;line-height:7.5px;color:#262626;font-weight:400;transform:scaleX(0.93)">Agent</div><div style="position:absolute;left:694.5px;top:516.1999999999999px;width:79.29999999999995px;height:8.600000000000023px;box-sizing:border-box;background:transparent;border:1px solid rgba(0,0,0,0.045);border-radius:2px"></div><div class="t" style="left:584.2px;width:300px;text-align:center;top:517.98px;font-size:7.7px;line-height:7.7px;color:#2a2a2a;font-weight:400;transform:scaleX(0.93)">GENERAL</div><div style="position:absolute;left:694.5px;top:528.8px;width:79.29999999999995px;height:7.7000000000000455px;box-sizing:border-box;background:transparent;border:1px solid rgba(0,0,0,0.045);border-radius:2px"></div><svg style="position:absolute;left:780.2px;top:516.8px;overflow:visible" width="4.5" height="7.5" viewBox="0 0 4.5 7.5"><path d="M3.8 0.6 L0.9 3.75 L3.8 6.9" fill="none" stroke="#1a1a1a" stroke-width="1.3"/></svg><svg style="position:absolute;left:780.2px;top:529.0px;overflow:visible" width="4.5" height="7.5" viewBox="0 0 4.5 7.5"><path d="M3.8 0.6 L0.9 3.75 L3.8 6.9" fill="none" stroke="#1a1a1a" stroke-width="1.3"/></svg><div style="position:absolute;left:787.5px;top:520.8px;width:16.2px;height:10.2px;box-sizing:border-box;border:1px solid #7a7a7a;border-radius:2px;background:#fff"></div><div class="t" style="left:645.4px;width:300px;text-align:center;top:523.24px;font-size:6.1px;line-height:6.1px;color:#1a1a1a;font-weight:400;transform:scaleX(0.9);-webkit-text-stroke:0.15px #1a1a1a">Omit</div><div style="position:absolute;left:808px;top:522.0px;width:7.2px;height:7.3px;box-sizing:border-box;border:1px solid #2a2a2a;background:#fff"></div><svg style="position:absolute;left:822px;top:522.1999999999999px;overflow:visible" width="6.5" height="7.5" viewBox="0 0 6.5 7.5"><rect x="2" y="0" width="2.5" height="1" fill="#707070"/><rect x="0" y="1" width="6.5" height="1.2" fill="#707070"/><path d="M0.6 2.5 H5.9 L5.4 7.5 H1.1 Z" fill="#8a8a8a"/><rect x="2" y="3.2" width="0.7" height="3.5" fill="#e8e8e8"/><rect x="3.8" y="3.2" width="0.7" height="3.5" fill="#e8e8e8"/></svg><svg style="position:absolute;left:104px;top:544.30px" width="716" height="2.2"><line x1="0" y1="1.1" x2="716" y2="1.1" stroke="#111" stroke-width="1.65" stroke-dasharray="3.7 3.3"/></svg><div style="position:absolute;left:105.5px;top:550.1000000000001px;width:124.80000000000001px;height:11px;box-sizing:border-box;background:transparent;border-bottom:1.5px solid #9c9c9c;border-radius:0 0 3px 3px"></div><svg style="position:absolute;left:233.5px;top:551.7px;overflow:visible" width="7" height="8" viewBox="0 0 7 8"><path d="M0.8 1.4 Q0.8 0.4 1.8 0.4 L5.2 0.4 Q6.2 0.4 6.2 1.4 L6.2 4.2 Q6.2 5.4 5 5.4 L2 5.4 Q0.8 5.4 0.8 4.2 Z" fill="#f2c46a" stroke="#7a5224" stroke-width="0.8"/><rect x="2.2" y="1.8" width="2.4" height="2.2" fill="#fde7b4"/><path d="M3.2 5.4 L4.6 5.4 L4.1 7.6 Z" fill="#4a4a4a"/></svg><div style="position:absolute;left:243.3px;top:550.1000000000001px;width:69.5px;height:11px;box-sizing:border-box;background:transparent;border-bottom:1.5px solid #9c9c9c;border-radius:0 0 3px 3px"></div><svg style="position:absolute;left:317px;top:551.4000000000001px;overflow:visible" width="8" height="8" viewBox="0 0 8 8"><path d="M1.3 0.8 Q0.2 2 1.2 4.2 Q2.8 7 5.2 7.6 Q6.3 7.8 7 7 L5.6 5.4 L4.7 5.9 Q3.2 5.2 2.5 3.4 L3.2 2.6 Z" fill="#e60048"/><path d="M4.2 0.6 Q7 1 7.4 3.8" fill="none" stroke="#f07098" stroke-width="0.9"/><path d="M4.2 2.2 Q5.8 2.5 6 4" fill="none" stroke="#f07098" stroke-width="0.9"/></svg><div style="position:absolute;left:327.8px;top:552.3000000000001px;width:40.19999999999999px;height:9px;box-sizing:border-box;background:transparent;border-bottom:1.5px solid #9c9c9c;border-radius:0 0 3px 3px"></div><div style="position:absolute;left:419.7px;top:550.1000000000001px;width:71.10000000000002px;height:11px;box-sizing:border-box;background:transparent;border-bottom:1.5px solid #9c9c9c;border-radius:0 0 3px 3px"></div><svg style="position:absolute;left:494.2px;top:551.4000000000001px;overflow:visible" width="8" height="8" viewBox="0 0 8 8"><path d="M1.3 0.8 Q0.2 2 1.2 4.2 Q2.8 7 5.2 7.6 Q6.3 7.8 7 7 L5.6 5.4 L4.7 5.9 Q3.2 5.2 2.5 3.4 L3.2 2.6 Z" fill="#e60048"/><path d="M4.2 0.6 Q7 1 7.4 3.8" fill="none" stroke="#f07098" stroke-width="0.9"/><path d="M4.2 2.2 Q5.8 2.5 6 4" fill="none" stroke="#f07098" stroke-width="0.9"/></svg><div class="t" style="left:105.6px;top:566.24px;font-size:7.4px;line-height:7.4px;color:#151515;font-weight:400;transform:scaleX(0.96);transform-origin:0 50%;-webkit-text-stroke:0.12px #151515">Notes:</div><div style="position:absolute;left:130.7px;top:565.1000000000001px;width:227.7px;height:9px;box-sizing:border-box;background:transparent;border-bottom:1.5px solid #9c9c9c;border-radius:0 0 3px 3px"></div><svg style="position:absolute;left:359.8px;top:565.3000000000001px;overflow:visible" width="8.5" height="8" viewBox="0 0 8.5 8"><circle cx="1.7" cy="1.6" r="0.85" fill="#7ab8f0"/><circle cx="4.5" cy="1.6" r="0.85" fill="#7ac4f0"/><circle cx="1.7" cy="4.4" r="0.85" fill="#7ab8f0"/><circle cx="4.5" cy="4.4" r="0.85" fill="#60c8e8"/><line x1="5.8" y1="5.8" x2="7.8" y2="7.6" stroke="#3c94e4" stroke-width="1.6" stroke-linecap="round"/></svg><div style="position:absolute;left:371px;top:564.0px;width:41px;height:9.600000000000023px;box-sizing:border-box;background:linear-gradient(#eeeef2,#e0e0e6);border-bottom:1px solid #d0d0d6"></div><div class="t" style="left:241.5px;width:300px;text-align:center;top:565.15px;font-size:7.5px;line-height:7.5px;color:#262626;font-weight:400;transform:scaleX(0.93)">Group</div><div style="position:absolute;left:414.5px;top:564.2px;width:74.5px;height:9.0px;box-sizing:border-box;background:transparent;border:1px solid rgba(0,0,0,0.045);border-radius:2px"></div><svg style="position:absolute;left:493px;top:565.2px;overflow:visible" width="4.5" height="7.5" viewBox="0 0 4.5 7.5"><path d="M3.8 0.6 L0.9 3.75 L3.8 6.9" fill="none" stroke="#1a1a1a" stroke-width="1.3"/></svg><div style="position:absolute;left:501px;top:564.2px;width:6.5px;height:9.5px;background:linear-gradient(#f4f4f4,#dcdcdc)"></div><div class="t" style="left:354.3px;width:300px;text-align:center;top:566.11px;font-size:6.6px;line-height:6.6px;color:#333;font-weight:700;">M</div><div style="position:absolute;left:510.7px;top:564.2px;width:75.80000000000001px;height:9.0px;box-sizing:border-box;background:transparent;border:1px solid rgba(0,0,0,0.045);border-radius:2px"></div><svg style="position:absolute;left:589.4px;top:565.0px;overflow:visible" width="4.5" height="7.5" viewBox="0 0 4.5 7.5"><path d="M3.8 0.6 L0.9 3.75 L3.8 6.9" fill="none" stroke="#1a1a1a" stroke-width="1.3"/></svg><svg style="position:absolute;left:642.8px;top:565.0px;overflow:visible" width="4.5" height="7.5" viewBox="0 0 4.5 7.5"><path d="M3.8 0.6 L0.9 3.75 L3.8 6.9" fill="none" stroke="#1a1a1a" stroke-width="1.3"/></svg><div style="position:absolute;left:650.5px;top:563.1px;width:40.5px;height:10.800000000000068px;box-sizing:border-box;background:linear-gradient(#eeeef2,#e0e0e6);border-bottom:1px solid #d0d0d6"></div><div class="t" style="left:520.75px;width:300px;text-align:center;top:565.45px;font-size:7.5px;line-height:7.5px;color:#262626;font-weight:400;transform:scaleX(0.93)">Agent</div><div style="position:absolute;left:694.5px;top:552.0px;width:79.29999999999995px;height:8.600000000000023px;box-sizing:border-box;background:transparent;border:1px solid rgba(0,0,0,0.045);border-radius:2px"></div><div class="t" style="left:584.2px;width:300px;text-align:center;top:553.78px;font-size:7.7px;line-height:7.7px;color:#2a2a2a;font-weight:400;transform:scaleX(0.93)">GENERAL</div><div style="position:absolute;left:694.5px;top:564.6px;width:79.29999999999995px;height:7.7000000000000455px;box-sizing:border-box;background:transparent;border:1px solid rgba(0,0,0,0.045);border-radius:2px"></div><svg style="position:absolute;left:780.2px;top:552.6px;overflow:visible" width="4.5" height="7.5" viewBox="0 0 4.5 7.5"><path d="M3.8 0.6 L0.9 3.75 L3.8 6.9" fill="none" stroke="#1a1a1a" stroke-width="1.3"/></svg><svg style="position:absolute;left:780.2px;top:564.8000000000001px;overflow:visible" width="4.5" height="7.5" viewBox="0 0 4.5 7.5"><path d="M3.8 0.6 L0.9 3.75 L3.8 6.9" fill="none" stroke="#1a1a1a" stroke-width="1.3"/></svg><div style="position:absolute;left:787.5px;top:556.6px;width:16.2px;height:10.2px;box-sizing:border-box;border:1px solid #7a7a7a;border-radius:2px;background:#fff"></div><div class="t" style="left:645.4px;width:300px;text-align:center;top:559.04px;font-size:6.1px;line-height:6.1px;color:#1a1a1a;font-weight:400;transform:scaleX(0.9);-webkit-text-stroke:0.15px #1a1a1a">Omit</div><div style="position:absolute;left:808px;top:557.8000000000001px;width:7.2px;height:7.3px;box-sizing:border-box;border:1px solid #2a2a2a;background:#fff"></div><svg style="position:absolute;left:822px;top:558.0px;overflow:visible" width="6.5" height="7.5" viewBox="0 0 6.5 7.5"><rect x="2" y="0" width="2.5" height="1" fill="#707070"/><rect x="0" y="1" width="6.5" height="1.2" fill="#707070"/><path d="M0.6 2.5 H5.9 L5.4 7.5 H1.1 Z" fill="#8a8a8a"/><rect x="2" y="3.2" width="0.7" height="3.5" fill="#e8e8e8"/><rect x="3.8" y="3.2" width="0.7" height="3.5" fill="#e8e8e8"/></svg><svg style="position:absolute;left:104px;top:580.10px" width="716" height="2.2"><line x1="0" y1="1.1" x2="716" y2="1.1" stroke="#111" stroke-width="1.65" stroke-dasharray="3.7 3.3"/></svg><div style="position:absolute;left:104.5px;top:582.2px;width:731px;height:34.8px;background:#fdfbd6"></div><div style="position:absolute;left:103.5px;top:581.2px;width:2px;height:36.8px;background:#111"></div><div style="position:absolute;left:105.5px;top:585.9000000000001px;width:124.80000000000001px;height:11px;box-sizing:border-box;background:transparent;border-bottom:1.5px solid #9c9c9c;border-radius:0 0 3px 3px"></div><svg style="position:absolute;left:233.5px;top:587.5px;overflow:visible" width="7" height="8" viewBox="0 0 7 8"><path d="M0.8 1.4 Q0.8 0.4 1.8 0.4 L5.2 0.4 Q6.2 0.4 6.2 1.4 L6.2 4.2 Q6.2 5.4 5 5.4 L2 5.4 Q0.8 5.4 0.8 4.2 Z" fill="#f2c46a" stroke="#7a5224" stroke-width="0.8"/><rect x="2.2" y="1.8" width="2.4" height="2.2" fill="#fde7b4"/><path d="M3.2 5.4 L4.6 5.4 L4.1 7.6 Z" fill="#4a4a4a"/></svg><div style="position:absolute;left:243.3px;top:585.9000000000001px;width:69.5px;height:11px;box-sizing:border-box;background:#e6eefa;border-bottom:1.5px solid #9c9c9c;border-radius:0 0 3px 3px"></div><svg style="position:absolute;left:317px;top:587.2px;overflow:visible" width="8" height="8" viewBox="0 0 8 8"><path d="M1.3 0.8 Q0.2 2 1.2 4.2 Q2.8 7 5.2 7.6 Q6.3 7.8 7 7 L5.6 5.4 L4.7 5.9 Q3.2 5.2 2.5 3.4 L3.2 2.6 Z" fill="#e60048"/><path d="M4.2 0.6 Q7 1 7.4 3.8" fill="none" stroke="#f07098" stroke-width="0.9"/><path d="M4.2 2.2 Q5.8 2.5 6 4" fill="none" stroke="#f07098" stroke-width="0.9"/></svg><div style="position:absolute;left:327.8px;top:588.1px;width:40.19999999999999px;height:9px;box-sizing:border-box;background:transparent;border-bottom:1.5px solid #9c9c9c;border-radius:0 0 3px 3px"></div><div style="position:absolute;left:419.7px;top:585.9000000000001px;width:71.10000000000002px;height:11px;box-sizing:border-box;background:#e6eefa;border-bottom:1.5px solid #9c9c9c;border-radius:0 0 3px 3px"></div><svg style="position:absolute;left:494.2px;top:587.2px;overflow:visible" width="8" height="8" viewBox="0 0 8 8"><path d="M1.3 0.8 Q0.2 2 1.2 4.2 Q2.8 7 5.2 7.6 Q6.3 7.8 7 7 L5.6 5.4 L4.7 5.9 Q3.2 5.2 2.5 3.4 L3.2 2.6 Z" fill="#e60048"/><path d="M4.2 0.6 Q7 1 7.4 3.8" fill="none" stroke="#f07098" stroke-width="0.9"/><path d="M4.2 2.2 Q5.8 2.5 6 4" fill="none" stroke="#f07098" stroke-width="0.9"/></svg><div class="t" style="left:105.6px;top:602.04px;font-size:7.4px;line-height:7.4px;color:#151515;font-weight:400;transform:scaleX(0.96);transform-origin:0 50%;-webkit-text-stroke:0.12px #151515">Notes:</div><div style="position:absolute;left:130.7px;top:600.9000000000001px;width:227.7px;height:9px;box-sizing:border-box;background:transparent;border-bottom:1.5px solid #9c9c9c;border-radius:0 0 3px 3px"></div><svg style="position:absolute;left:359.8px;top:601.1px;overflow:visible" width="8.5" height="8" viewBox="0 0 8.5 8"><circle cx="1.7" cy="1.6" r="0.85" fill="#7ab8f0"/><circle cx="4.5" cy="1.6" r="0.85" fill="#7ac4f0"/><circle cx="1.7" cy="4.4" r="0.85" fill="#7ab8f0"/><circle cx="4.5" cy="4.4" r="0.85" fill="#60c8e8"/><line x1="5.8" y1="5.8" x2="7.8" y2="7.6" stroke="#3c94e4" stroke-width="1.6" stroke-linecap="round"/></svg><div style="position:absolute;left:371px;top:599.8px;width:41px;height:9.600000000000023px;box-sizing:border-box;background:linear-gradient(#eeeef2,#e0e0e6);border-bottom:1px solid #d0d0d6"></div><div class="t" style="left:241.5px;width:300px;text-align:center;top:600.95px;font-size:7.5px;line-height:7.5px;color:#262626;font-weight:400;transform:scaleX(0.93)">Group</div><div style="position:absolute;left:414.5px;top:600.0px;width:74.5px;height:9.0px;box-sizing:border-box;background:transparent;border:1px solid rgba(0,0,0,0.045);border-radius:2px"></div><svg style="position:absolute;left:493px;top:601.0px;overflow:visible" width="4.5" height="7.5" viewBox="0 0 4.5 7.5"><path d="M3.8 0.6 L0.9 3.75 L3.8 6.9" fill="none" stroke="#1a1a1a" stroke-width="1.3"/></svg><div style="position:absolute;left:501px;top:600.0px;width:6.5px;height:9.5px;background:linear-gradient(#f4f4f4,#dcdcdc)"></div><div class="t" style="left:354.3px;width:300px;text-align:center;top:601.91px;font-size:6.6px;line-height:6.6px;color:#333;font-weight:700;">M</div><div style="position:absolute;left:510.7px;top:600.0px;width:75.80000000000001px;height:9.0px;box-sizing:border-box;background:transparent;border:1px solid rgba(0,0,0,0.045);border-radius:2px"></div><svg style="position:absolute;left:589.4px;top:600.8px;overflow:visible" width="4.5" height="7.5" viewBox="0 0 4.5 7.5"><path d="M3.8 0.6 L0.9 3.75 L3.8 6.9" fill="none" stroke="#1a1a1a" stroke-width="1.3"/></svg><svg style="position:absolute;left:642.8px;top:600.8px;overflow:visible" width="4.5" height="7.5" viewBox="0 0 4.5 7.5"><path d="M3.8 0.6 L0.9 3.75 L3.8 6.9" fill="none" stroke="#1a1a1a" stroke-width="1.3"/></svg><div style="position:absolute;left:650.5px;top:598.9px;width:40.5px;height:10.800000000000068px;box-sizing:border-box;background:linear-gradient(#eeeef2,#e0e0e6);border-bottom:1px solid #d0d0d6"></div><div class="t" style="left:520.75px;width:300px;text-align:center;top:601.25px;font-size:7.5px;line-height:7.5px;color:#262626;font-weight:400;transform:scaleX(0.93)">Agent</div><div style="position:absolute;left:694.5px;top:587.8px;width:79.29999999999995px;height:8.600000000000023px;box-sizing:border-box;background:transparent;border:1px solid rgba(0,0,0,0.045);border-radius:2px"></div><div class="t" style="left:584.2px;width:300px;text-align:center;top:589.58px;font-size:7.7px;line-height:7.7px;color:#2a2a2a;font-weight:400;transform:scaleX(0.93)">GENERAL</div><div style="position:absolute;left:694.5px;top:600.4px;width:79.29999999999995px;height:7.7000000000000455px;box-sizing:border-box;background:transparent;border:1px solid rgba(0,0,0,0.045);border-radius:2px"></div><svg style="position:absolute;left:780.2px;top:588.4px;overflow:visible" width="4.5" height="7.5" viewBox="0 0 4.5 7.5"><path d="M3.8 0.6 L0.9 3.75 L3.8 6.9" fill="none" stroke="#1a1a1a" stroke-width="1.3"/></svg><svg style="position:absolute;left:780.2px;top:600.6px;overflow:visible" width="4.5" height="7.5" viewBox="0 0 4.5 7.5"><path d="M3.8 0.6 L0.9 3.75 L3.8 6.9" fill="none" stroke="#1a1a1a" stroke-width="1.3"/></svg><div style="position:absolute;left:787.5px;top:592.4px;width:16.2px;height:10.2px;box-sizing:border-box;border:1px solid #7a7a7a;border-radius:2px;background:#fff"></div><div class="t" style="left:645.4px;width:300px;text-align:center;top:594.84px;font-size:6.1px;line-height:6.1px;color:#1a1a1a;font-weight:400;transform:scaleX(0.9);-webkit-text-stroke:0.15px #1a1a1a">Omit</div><div style="position:absolute;left:808px;top:593.6px;width:7.2px;height:7.3px;box-sizing:border-box;border:1px solid #2a2a2a;background:#fff"></div><svg style="position:absolute;left:822px;top:593.8px;overflow:visible" width="6.5" height="7.5" viewBox="0 0 6.5 7.5"><rect x="2" y="0" width="2.5" height="1" fill="#707070"/><rect x="0" y="1" width="6.5" height="1.2" fill="#707070"/><path d="M0.6 2.5 H5.9 L5.4 7.5 H1.1 Z" fill="#8a8a8a"/><rect x="2" y="3.2" width="0.7" height="3.5" fill="#e8e8e8"/><rect x="3.8" y="3.2" width="0.7" height="3.5" fill="#e8e8e8"/></svg><svg style="position:absolute;left:104px;top:615.90px" width="716" height="2.2"><line x1="0" y1="1.1" x2="716" y2="1.1" stroke="#111" stroke-width="1.65" stroke-dasharray="3.7 3.3"/></svg><svg style="position:absolute;left:0;top:0" width="938" height="729" viewBox="0 0 938 729"><defs><filter id="sh" x="-20%" y="-20%" width="140%" height="150%"><feGaussianBlur in="SourceAlpha" stdDeviation="2"/><feOffset dx="2" dy="3" result="o"/><feComponentTransfer><feFuncA type="linear" slope="0.38"/></feComponentTransfer><feMerge><feMergeNode/><feMergeNode in="SourceGraphic"/></feMerge></filter></defs><g filter="url(#sh)"><path d="M147.5 16.2 H265.6 A19 18 0 0 1 284.6 34.2 V70.6 A19 18 0 0 1 265.6 88.6 H254 L412 196.2 L216.5 88.6 H147.5 A19 18 0 0 1 128.5 70.6 V34.2 A19 18 0 0 1 147.5 16.2 Z" fill="#fff" stroke="#e4463c" stroke-width="2.8" stroke-linejoin="miter"/><path d="M529.7 25.8 H677.5 A24 13 0 0 1 701.5 38.8 V57.2 A24 13 0 0 1 677.5 70.2 H591.8 L508.8 92.2 L545.5 70.2 H529.7 A24 13 0 0 1 505.7 57.2 V38.8 A24 13 0 0 1 529.7 25.8 Z" fill="#fff" stroke="#e4463c" stroke-width="2.8"/><path d="M786.1 13.6 H900.2 A19 19 0 0 1 919.2 32.6 V66.4 A19 19 0 0 1 900.2 85.4 H833.5 L780.4 112.2 L795.2 85.4 H786.1 A19 19 0 0 1 767.1 66.4 V32.6 A19 19 0 0 1 786.1 13.6 Z" fill="#fff" stroke="#e4463c" stroke-width="2.8"/></g></svg><div class="t" style="left:56.30000000000001px;width:300px;text-align:center;top:26.75px;font-size:16.6px;line-height:16.6px;color:#ea5248;font-weight:400;transform:scaleX(0.95);transform-origin:50% 50%">Ideal to Control</div><div class="t" style="left:56.30000000000001px;width:300px;text-align:center;top:44.50px;font-size:16.6px;line-height:16.6px;color:#ea5248;font-weight:400;transform:scaleX(0.95);transform-origin:50% 50%">Calls that don't</div><div class="t" style="left:56.30000000000001px;width:300px;text-align:center;top:62.25px;font-size:16.6px;line-height:16.6px;color:#ea5248;font-weight:400;transform:scaleX(0.95);transform-origin:50% 50%">leave Messages</div><div class="t" style="left:452.5px;width:300px;text-align:center;top:39.95px;font-size:16.6px;line-height:16.6px;color:#ea5248;font-weight:400;transform:scaleX(0.95);transform-origin:50% 50%">Many Search Options</div><div class="t" style="left:692px;width:300px;text-align:center;top:22.95px;font-size:16.6px;line-height:16.6px;color:#ea5248;font-weight:400;transform:scaleX(0.95);transform-origin:50% 50%">Import your PBX</div><div class="t" style="left:692px;width:300px;text-align:center;top:40.55px;font-size:16.6px;line-height:16.6px;color:#ea5248;font-weight:400;transform:scaleX(0.95);transform-origin:50% 50%">Reports with</div><div class="t" style="left:692px;width:300px;text-align:center;top:58.15px;font-size:16.6px;line-height:16.6px;color:#ea5248;font-weight:400;transform:scaleX(0.95);transform-origin:50% 50%">Ease</div>
</body></html>
